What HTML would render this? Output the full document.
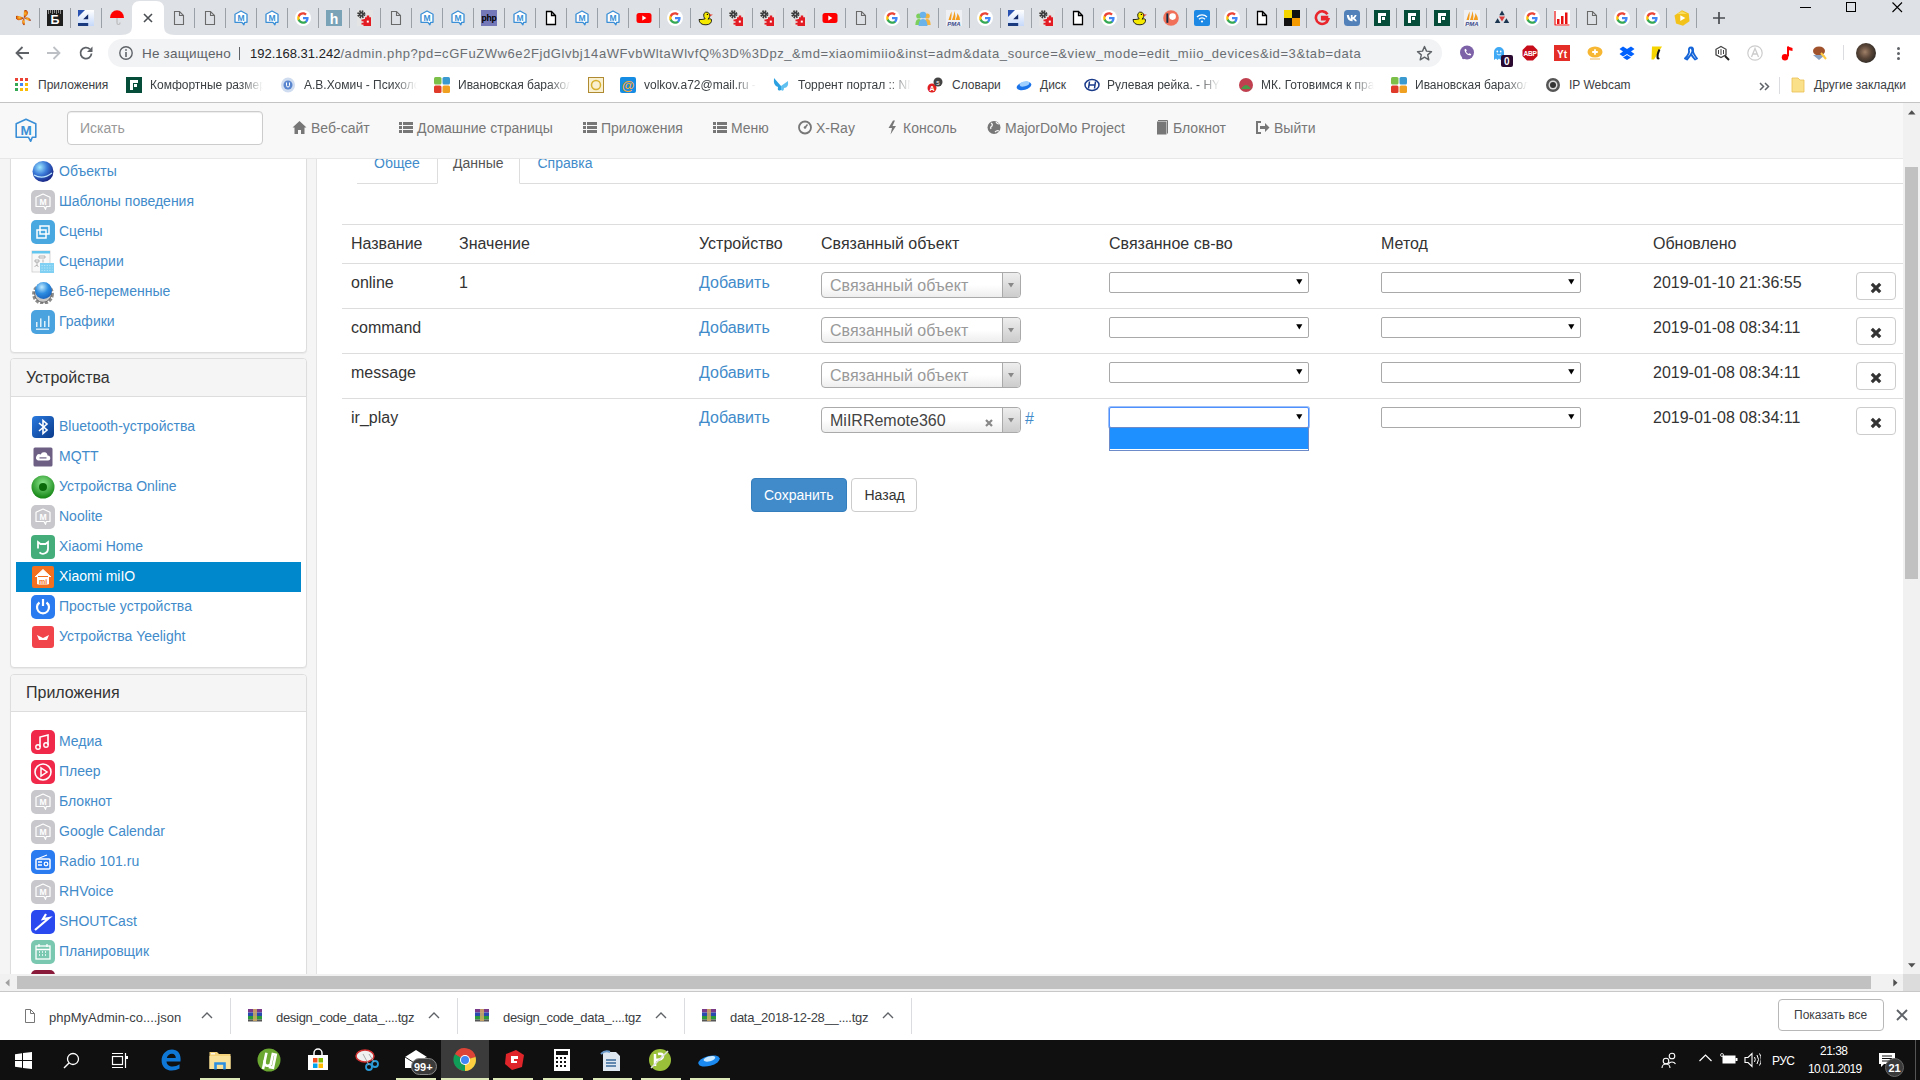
<!DOCTYPE html><html><head><meta charset="utf-8"><style>
html,body{margin:0;padding:0;width:1920px;height:1080px;overflow:hidden;background:#fff;font-family:"Liberation Sans", sans-serif;}
.a{position:absolute;}
.t{position:absolute;white-space:nowrap;line-height:1;}
.fade{-webkit-mask-image:linear-gradient(to right,#000 80%,transparent 100%);mask-image:linear-gradient(to right,#000 80%,transparent 100%);overflow:hidden;}
</style></head><body>
<div class="a" style="left:0px;top:0px;width:1920px;height:35px;background:#dee1e6"></div>
<svg class="a" style="left:120px;top:0" width="56" height="35" viewBox="0 0 56 35"><path d="M1 35 Q12 35 12 27 V9 Q12 1 20 1 H36 Q44 1 44 9 V27 Q44 35 55 35 Z" fill="#fff"/></svg>
<div class="a" style="left:39px;top:8px;width:1px;height:20px;background:#9aa0a6"></div>
<div class="a" style="left:70px;top:8px;width:1px;height:20px;background:#9aa0a6"></div>
<div class="a" style="left:101px;top:8px;width:1px;height:20px;background:#9aa0a6"></div>
<div class="a" style="left:194px;top:8px;width:1px;height:20px;background:#9aa0a6"></div>
<div class="a" style="left:225px;top:8px;width:1px;height:20px;background:#9aa0a6"></div>
<div class="a" style="left:256px;top:8px;width:1px;height:20px;background:#9aa0a6"></div>
<div class="a" style="left:287px;top:8px;width:1px;height:20px;background:#9aa0a6"></div>
<div class="a" style="left:318px;top:8px;width:1px;height:20px;background:#9aa0a6"></div>
<div class="a" style="left:349px;top:8px;width:1px;height:20px;background:#9aa0a6"></div>
<div class="a" style="left:380px;top:8px;width:1px;height:20px;background:#9aa0a6"></div>
<div class="a" style="left:411px;top:8px;width:1px;height:20px;background:#9aa0a6"></div>
<div class="a" style="left:442px;top:8px;width:1px;height:20px;background:#9aa0a6"></div>
<div class="a" style="left:473px;top:8px;width:1px;height:20px;background:#9aa0a6"></div>
<div class="a" style="left:504px;top:8px;width:1px;height:20px;background:#9aa0a6"></div>
<div class="a" style="left:535px;top:8px;width:1px;height:20px;background:#9aa0a6"></div>
<div class="a" style="left:566px;top:8px;width:1px;height:20px;background:#9aa0a6"></div>
<div class="a" style="left:597px;top:8px;width:1px;height:20px;background:#9aa0a6"></div>
<div class="a" style="left:628px;top:8px;width:1px;height:20px;background:#9aa0a6"></div>
<div class="a" style="left:659px;top:8px;width:1px;height:20px;background:#9aa0a6"></div>
<div class="a" style="left:690px;top:8px;width:1px;height:20px;background:#9aa0a6"></div>
<div class="a" style="left:721px;top:8px;width:1px;height:20px;background:#9aa0a6"></div>
<div class="a" style="left:752px;top:8px;width:1px;height:20px;background:#9aa0a6"></div>
<div class="a" style="left:783px;top:8px;width:1px;height:20px;background:#9aa0a6"></div>
<div class="a" style="left:814px;top:8px;width:1px;height:20px;background:#9aa0a6"></div>
<div class="a" style="left:845px;top:8px;width:1px;height:20px;background:#9aa0a6"></div>
<div class="a" style="left:876px;top:8px;width:1px;height:20px;background:#9aa0a6"></div>
<div class="a" style="left:907px;top:8px;width:1px;height:20px;background:#9aa0a6"></div>
<div class="a" style="left:938px;top:8px;width:1px;height:20px;background:#9aa0a6"></div>
<div class="a" style="left:969px;top:8px;width:1px;height:20px;background:#9aa0a6"></div>
<div class="a" style="left:1000px;top:8px;width:1px;height:20px;background:#9aa0a6"></div>
<div class="a" style="left:1031px;top:8px;width:1px;height:20px;background:#9aa0a6"></div>
<div class="a" style="left:1062px;top:8px;width:1px;height:20px;background:#9aa0a6"></div>
<div class="a" style="left:1093px;top:8px;width:1px;height:20px;background:#9aa0a6"></div>
<div class="a" style="left:1124px;top:8px;width:1px;height:20px;background:#9aa0a6"></div>
<div class="a" style="left:1155px;top:8px;width:1px;height:20px;background:#9aa0a6"></div>
<div class="a" style="left:1186px;top:8px;width:1px;height:20px;background:#9aa0a6"></div>
<div class="a" style="left:1216px;top:8px;width:1px;height:20px;background:#9aa0a6"></div>
<div class="a" style="left:1246px;top:8px;width:1px;height:20px;background:#9aa0a6"></div>
<div class="a" style="left:1276px;top:8px;width:1px;height:20px;background:#9aa0a6"></div>
<div class="a" style="left:1306px;top:8px;width:1px;height:20px;background:#9aa0a6"></div>
<div class="a" style="left:1336px;top:8px;width:1px;height:20px;background:#9aa0a6"></div>
<div class="a" style="left:1366px;top:8px;width:1px;height:20px;background:#9aa0a6"></div>
<div class="a" style="left:1396px;top:8px;width:1px;height:20px;background:#9aa0a6"></div>
<div class="a" style="left:1426px;top:8px;width:1px;height:20px;background:#9aa0a6"></div>
<div class="a" style="left:1456px;top:8px;width:1px;height:20px;background:#9aa0a6"></div>
<div class="a" style="left:1486px;top:8px;width:1px;height:20px;background:#9aa0a6"></div>
<div class="a" style="left:1516px;top:8px;width:1px;height:20px;background:#9aa0a6"></div>
<div class="a" style="left:1546px;top:8px;width:1px;height:20px;background:#9aa0a6"></div>
<div class="a" style="left:1576px;top:8px;width:1px;height:20px;background:#9aa0a6"></div>
<div class="a" style="left:1606px;top:8px;width:1px;height:20px;background:#9aa0a6"></div>
<div class="a" style="left:1636px;top:8px;width:1px;height:20px;background:#9aa0a6"></div>
<div class="a" style="left:1666px;top:8px;width:1px;height:20px;background:#9aa0a6"></div>
<div class="a" style="left:1696px;top:8px;width:1px;height:20px;background:#9aa0a6"></div>
<svg class="a" style="left:16px;top:10px" width="16" height="16" viewBox="0 0 16 16"><defs><radialGradient id="bfg" cx="50%" cy="50%" r="60%"><stop offset="0" stop-color="#f8c030"/><stop offset=".6" stop-color="#e87010"/><stop offset="1" stop-color="#902000"/></radialGradient></defs><g transform="rotate(-35 8 8)" fill="url(#bfg)"><path d="M8 8 Q3 -1 1.5 3 Q0 8 8 8z"/><path d="M8 8 Q13 -1 14.5 3 Q16 8 8 8z"/><path d="M8 8 Q3 9 3.5 13.5 Q5 16 8 8z"/><path d="M8 8 Q13 9 12.5 13.5 Q11 16 8 8z"/></g></svg>
<svg class="a" style="left:47px;top:10px" width="16" height="16" viewBox="0 0 16 16"><rect x="0" y="0" width="16" height="16" fill="#1e1e1e"/><path d="M1.5 0v4M3.5 0v3M5.5 0v4M7.5 0v3M9.5 0v4M11.5 0v3M13.5 0v4" stroke="#aaa" stroke-width=".8"/><text x="8" y="13.8" font-size="12.5" font-family="Liberation Sans" font-weight="bold" text-anchor="middle" fill="#fff">Б</text></svg>
<svg class="a" style="left:78px;top:10px" width="16" height="16" viewBox="0 0 16 16"><defs><linearGradient id="g4i" x1="0" y1="0" x2="0" y2="1"><stop offset="0" stop-color="#fff"/><stop offset="1" stop-color="#c5d8fa"/></linearGradient></defs><rect x="0" y="0" width="16" height="16" fill="url(#g4i)"/><path d="M0 0H7L0 7z" fill="#2a52b0"/><path d="M10.2 4.2V9.2H5.2z" fill="#122a6a"/><rect x="0" y="13" width="10.2" height="3" fill="#1a3a80"/></svg>
<svg class="a" style="left:109px;top:10px" width="16" height="16" viewBox="0 0 16 16"><path d="M1 8 A7 7.8 0 0 1 15 8 Z" fill="#f00"/><path d="M8 8v5a1.5 1.5 0 0 0 3 0v-.5" fill="none" stroke="#bbb" stroke-width="1.2"/></svg>
<svg class="a" style="left:171px;top:10px" width="16" height="16" viewBox="0 0 16 16"><path d="M3.5 1.5 H8.5 L12.5 5.5 V14.5 H3.5 Z M8.5 1.5 V5.5 H12.5" fill="none" stroke="#6a6a6a" stroke-width="1.1" stroke-linejoin="miter"/></svg>
<svg class="a" style="left:202px;top:10px" width="16" height="16" viewBox="0 0 16 16"><path d="M3.5 1.5 H8.5 L12.5 5.5 V14.5 H3.5 Z M8.5 1.5 V5.5 H12.5" fill="none" stroke="#6a6a6a" stroke-width="1.1" stroke-linejoin="miter"/></svg>
<svg class="a" style="left:233px;top:10px" width="16" height="16" viewBox="0 0 16 16"><path d="M8 1 L14 4.2 V12.3 H11.6 L10.9 14.8 L8.9 12.3 H2 V4.2 Z" fill="#fff" stroke="#3a8fd6" stroke-width="1.3" stroke-linejoin="round"/><text x="8" y="11.2" font-size="8.5" font-family="Liberation Sans" font-weight="bold" text-anchor="middle" fill="#3a8fd6">M</text></svg>
<svg class="a" style="left:264px;top:10px" width="16" height="16" viewBox="0 0 16 16"><path d="M8 1 L14 4.2 V12.3 H11.6 L10.9 14.8 L8.9 12.3 H2 V4.2 Z" fill="#fff" stroke="#3a8fd6" stroke-width="1.3" stroke-linejoin="round"/><text x="8" y="11.2" font-size="8.5" font-family="Liberation Sans" font-weight="bold" text-anchor="middle" fill="#3a8fd6">M</text></svg>
<svg class="a" style="left:295px;top:10px" width="16" height="16" viewBox="0 0 16 16"><circle cx="8" cy="8" r="8" fill="#fff"/><path d="M13.6 8.1c0-.4 0-.8-.1-1.2H8v2.3h3.2c-.1.8-.6 1.4-1.2 1.8v1.5h1.9c1.1-1 1.7-2.5 1.7-4.4z" fill="#4285f4"/><path d="M8 13.8c1.6 0 2.9-.5 3.9-1.4L10 10.9c-.5.4-1.2.6-2 .6-1.5 0-2.8-1-3.3-2.4H2.8v1.5C3.8 12.6 5.7 13.8 8 13.8z" fill="#34a853"/><path d="M4.7 9.1c-.1-.4-.2-.8-.2-1.1s.1-.8.2-1.1V5.4H2.8C2.4 6.2 2.2 7.1 2.2 8s.2 1.8.6 2.6z" fill="#fbbc05"/><path d="M8 4.5c.9 0 1.6.3 2.2.9l1.6-1.6C10.9 2.8 9.6 2.2 8 2.2 5.7 2.2 3.8 3.4 2.8 5.4l1.9 1.5C5.2 5.5 6.5 4.5 8 4.5z" fill="#ea4335"/></svg>
<svg class="a" style="left:326px;top:10px" width="16" height="16" viewBox="0 0 16 16"><rect x="0" y="0" width="16" height="16" fill="#7ba3b8"/><text x="8" y="13.5" font-size="14" font-family="Liberation Sans" font-weight="bold" text-anchor="middle" fill="#fff">h</text></svg>
<svg class="a" style="left:357px;top:10px" width="16" height="16" viewBox="0 0 16 16"><rect x="0" y="0" width="16" height="16" fill="#e4e4e4"/><circle cx="4.3" cy="4.3" r="3.1" fill="none" stroke="#3a3a3a" stroke-width="2" stroke-dasharray="1.5 0.95"/><circle cx="4.3" cy="4.3" r="2.5" fill="#3a3a3a"/><circle cx="4.3" cy="4.3" r=".9" fill="#bbb"/><path d="M6.5 16V9H8V7.3h1.8V5.5h2.4v1.8H14V16z" fill="#e31b23"/><rect x="4.5" y="9.5" width="2.5" height="1.8" fill="#e31b23"/><rect x="4.5" y="12.8" width="2.5" height="1.8" fill="#e31b23"/><rect x="9.8" y="10.6" width="2" height="2" fill="#fff"/></svg>
<svg class="a" style="left:388px;top:10px" width="16" height="16" viewBox="0 0 16 16"><path d="M3.5 1.5 H8.5 L12.5 5.5 V14.5 H3.5 Z M8.5 1.5 V5.5 H12.5" fill="none" stroke="#6a6a6a" stroke-width="1.1" stroke-linejoin="miter"/></svg>
<svg class="a" style="left:419px;top:10px" width="16" height="16" viewBox="0 0 16 16"><path d="M8 1 L14 4.2 V12.3 H11.6 L10.9 14.8 L8.9 12.3 H2 V4.2 Z" fill="#fff" stroke="#3a8fd6" stroke-width="1.3" stroke-linejoin="round"/><text x="8" y="11.2" font-size="8.5" font-family="Liberation Sans" font-weight="bold" text-anchor="middle" fill="#3a8fd6">M</text></svg>
<svg class="a" style="left:450px;top:10px" width="16" height="16" viewBox="0 0 16 16"><path d="M8 1 L14 4.2 V12.3 H11.6 L10.9 14.8 L8.9 12.3 H2 V4.2 Z" fill="#fff" stroke="#3a8fd6" stroke-width="1.3" stroke-linejoin="round"/><text x="8" y="11.2" font-size="8.5" font-family="Liberation Sans" font-weight="bold" text-anchor="middle" fill="#3a8fd6">M</text></svg>
<svg class="a" style="left:481px;top:10px" width="16" height="16" viewBox="0 0 16 16"><rect x="0" y="0" width="16" height="16" fill="#7478b8"/><text x="8" y="11" font-size="8.6" font-family="Liberation Sans" font-weight="bold" text-anchor="middle" fill="#000" letter-spacing="-0.3">php</text></svg>
<svg class="a" style="left:512px;top:10px" width="16" height="16" viewBox="0 0 16 16"><path d="M8 1 L14 4.2 V12.3 H11.6 L10.9 14.8 L8.9 12.3 H2 V4.2 Z" fill="#fff" stroke="#3a8fd6" stroke-width="1.3" stroke-linejoin="round"/><text x="8" y="11.2" font-size="8.5" font-family="Liberation Sans" font-weight="bold" text-anchor="middle" fill="#3a8fd6">M</text></svg>
<svg class="a" style="left:543px;top:10px" width="16" height="16" viewBox="0 0 16 16"><path d="M3.5 1.5 H8.5 L12.5 5.5 V14.5 H3.5 Z M8.5 1.5 V5.5 H12.5" fill="#fff" stroke="#000" stroke-width="1.3" stroke-linejoin="miter"/></svg>
<svg class="a" style="left:574px;top:10px" width="16" height="16" viewBox="0 0 16 16"><path d="M8 1 L14 4.2 V12.3 H11.6 L10.9 14.8 L8.9 12.3 H2 V4.2 Z" fill="#fff" stroke="#3a8fd6" stroke-width="1.3" stroke-linejoin="round"/><text x="8" y="11.2" font-size="8.5" font-family="Liberation Sans" font-weight="bold" text-anchor="middle" fill="#3a8fd6">M</text></svg>
<svg class="a" style="left:605px;top:10px" width="16" height="16" viewBox="0 0 16 16"><path d="M8 1 L14 4.2 V12.3 H11.6 L10.9 14.8 L8.9 12.3 H2 V4.2 Z" fill="#fff" stroke="#3a8fd6" stroke-width="1.3" stroke-linejoin="round"/><text x="8" y="11.2" font-size="8.5" font-family="Liberation Sans" font-weight="bold" text-anchor="middle" fill="#3a8fd6">M</text></svg>
<svg class="a" style="left:636px;top:10px" width="16" height="16" viewBox="0 0 16 16"><rect x="0.5" y="3" width="15" height="10" rx="2.5" fill="#f00"/><path d="M6.3 5.6v4.8L10.4 8z" fill="#fff"/></svg>
<svg class="a" style="left:667px;top:10px" width="16" height="16" viewBox="0 0 16 16"><circle cx="8" cy="8" r="8" fill="#fff"/><path d="M13.6 8.1c0-.4 0-.8-.1-1.2H8v2.3h3.2c-.1.8-.6 1.4-1.2 1.8v1.5h1.9c1.1-1 1.7-2.5 1.7-4.4z" fill="#4285f4"/><path d="M8 13.8c1.6 0 2.9-.5 3.9-1.4L10 10.9c-.5.4-1.2.6-2 .6-1.5 0-2.8-1-3.3-2.4H2.8v1.5C3.8 12.6 5.7 13.8 8 13.8z" fill="#34a853"/><path d="M4.7 9.1c-.1-.4-.2-.8-.2-1.1s.1-.8.2-1.1V5.4H2.8C2.4 6.2 2.2 7.1 2.2 8s.2 1.8.6 2.6z" fill="#fbbc05"/><path d="M8 4.5c.9 0 1.6.3 2.2.9l1.6-1.6C10.9 2.8 9.6 2.2 8 2.2 5.7 2.2 3.8 3.4 2.8 5.4l1.9 1.5C5.2 5.5 6.5 4.5 8 4.5z" fill="#ea4335"/></svg>
<svg class="a" style="left:698px;top:10px" width="16" height="16" viewBox="0 0 16 16"><path d="M1 9.5 Q1.5 15 8 14.8 Q14 14.5 13.5 9.5 Q12 8 10 9.2 Q12.8 7 11.5 4 Q10 1.3 7.5 2.2 Q5 3.2 5.8 6.5 Q6.3 8.3 7.2 8.8 Q4 9.8 1 9.5z" fill="#f5e900" stroke="#111" stroke-width=".9" stroke-linejoin="round"/><path d="M11.3 4.2 L15 4.8 L11.8 6.2z" fill="#e0301e"/><circle cx="9.4" cy="4.4" r=".7" fill="#000"/></svg>
<svg class="a" style="left:729px;top:10px" width="16" height="16" viewBox="0 0 16 16"><rect x="0" y="0" width="16" height="16" fill="#e4e4e4"/><circle cx="4.3" cy="4.3" r="3.1" fill="none" stroke="#3a3a3a" stroke-width="2" stroke-dasharray="1.5 0.95"/><circle cx="4.3" cy="4.3" r="2.5" fill="#3a3a3a"/><circle cx="4.3" cy="4.3" r=".9" fill="#bbb"/><path d="M6.5 16V9H8V7.3h1.8V5.5h2.4v1.8H14V16z" fill="#e31b23"/><rect x="4.5" y="9.5" width="2.5" height="1.8" fill="#e31b23"/><rect x="4.5" y="12.8" width="2.5" height="1.8" fill="#e31b23"/><rect x="9.8" y="10.6" width="2" height="2" fill="#fff"/></svg>
<svg class="a" style="left:760px;top:10px" width="16" height="16" viewBox="0 0 16 16"><rect x="0" y="0" width="16" height="16" fill="#e4e4e4"/><circle cx="4.3" cy="4.3" r="3.1" fill="none" stroke="#3a3a3a" stroke-width="2" stroke-dasharray="1.5 0.95"/><circle cx="4.3" cy="4.3" r="2.5" fill="#3a3a3a"/><circle cx="4.3" cy="4.3" r=".9" fill="#bbb"/><path d="M6.5 16V9H8V7.3h1.8V5.5h2.4v1.8H14V16z" fill="#e31b23"/><rect x="4.5" y="9.5" width="2.5" height="1.8" fill="#e31b23"/><rect x="4.5" y="12.8" width="2.5" height="1.8" fill="#e31b23"/><rect x="9.8" y="10.6" width="2" height="2" fill="#fff"/></svg>
<svg class="a" style="left:791px;top:10px" width="16" height="16" viewBox="0 0 16 16"><rect x="0" y="0" width="16" height="16" fill="#e4e4e4"/><circle cx="4.3" cy="4.3" r="3.1" fill="none" stroke="#3a3a3a" stroke-width="2" stroke-dasharray="1.5 0.95"/><circle cx="4.3" cy="4.3" r="2.5" fill="#3a3a3a"/><circle cx="4.3" cy="4.3" r=".9" fill="#bbb"/><path d="M6.5 16V9H8V7.3h1.8V5.5h2.4v1.8H14V16z" fill="#e31b23"/><rect x="4.5" y="9.5" width="2.5" height="1.8" fill="#e31b23"/><rect x="4.5" y="12.8" width="2.5" height="1.8" fill="#e31b23"/><rect x="9.8" y="10.6" width="2" height="2" fill="#fff"/></svg>
<svg class="a" style="left:822px;top:10px" width="16" height="16" viewBox="0 0 16 16"><rect x="0.5" y="3" width="15" height="10" rx="2.5" fill="#f00"/><path d="M6.3 5.6v4.8L10.4 8z" fill="#fff"/></svg>
<svg class="a" style="left:853px;top:10px" width="16" height="16" viewBox="0 0 16 16"><path d="M3.5 1.5 H8.5 L12.5 5.5 V14.5 H3.5 Z M8.5 1.5 V5.5 H12.5" fill="none" stroke="#6a6a6a" stroke-width="1.1" stroke-linejoin="miter"/></svg>
<svg class="a" style="left:884px;top:10px" width="16" height="16" viewBox="0 0 16 16"><circle cx="8" cy="8" r="8" fill="#fff"/><path d="M13.6 8.1c0-.4 0-.8-.1-1.2H8v2.3h3.2c-.1.8-.6 1.4-1.2 1.8v1.5h1.9c1.1-1 1.7-2.5 1.7-4.4z" fill="#4285f4"/><path d="M8 13.8c1.6 0 2.9-.5 3.9-1.4L10 10.9c-.5.4-1.2.6-2 .6-1.5 0-2.8-1-3.3-2.4H2.8v1.5C3.8 12.6 5.7 13.8 8 13.8z" fill="#34a853"/><path d="M4.7 9.1c-.1-.4-.2-.8-.2-1.1s.1-.8.2-1.1V5.4H2.8C2.4 6.2 2.2 7.1 2.2 8s.2 1.8.6 2.6z" fill="#fbbc05"/><path d="M8 4.5c.9 0 1.6.3 2.2.9l1.6-1.6C10.9 2.8 9.6 2.2 8 2.2 5.7 2.2 3.8 3.4 2.8 5.4l1.9 1.5C5.2 5.5 6.5 4.5 8 4.5z" fill="#ea4335"/></svg>
<svg class="a" style="left:915px;top:10px" width="16" height="16" viewBox="0 0 16 16"><circle cx="3.8" cy="6" r="2.6" fill="#7ccf5a"/><path d="M0.3 15 Q0.5 9 3.8 9 Q6 9 6.5 12 V15z" fill="#7ccf5a"/><circle cx="12.2" cy="6" r="2.6" fill="#f3b33d"/><path d="M15.7 15 Q15.5 9 12.2 9 Q10 9 9.5 12 V15z" fill="#f3b33d"/><circle cx="8" cy="5" r="3.3" fill="#6ab3ea"/><path d="M3.5 16 Q3.8 9 8 9 Q12.2 9 12.5 16z" fill="#6ab3ea"/></svg>
<svg class="a" style="left:946px;top:10px" width="16" height="16" viewBox="0 0 16 16"><rect x="0" y="0" width="16" height="16" fill="#fff" fill-opacity=".5"/><path d="M2.5 10 Q4 5 5.5 1.5 Q6 5 5 10z M6 10 Q8 5 8.5 1 Q10 6 9 10z M9.5 10 Q11.5 6 11.5 3 Q14 7 14 10z" fill="#f39c1e"/><text x="8" y="15.5" font-size="6" font-family="Liberation Sans" font-weight="bold" font-style="italic" text-anchor="middle" fill="#3a4a8a">PMA</text></svg>
<svg class="a" style="left:977px;top:10px" width="16" height="16" viewBox="0 0 16 16"><circle cx="8" cy="8" r="8" fill="#fff"/><path d="M13.6 8.1c0-.4 0-.8-.1-1.2H8v2.3h3.2c-.1.8-.6 1.4-1.2 1.8v1.5h1.9c1.1-1 1.7-2.5 1.7-4.4z" fill="#4285f4"/><path d="M8 13.8c1.6 0 2.9-.5 3.9-1.4L10 10.9c-.5.4-1.2.6-2 .6-1.5 0-2.8-1-3.3-2.4H2.8v1.5C3.8 12.6 5.7 13.8 8 13.8z" fill="#34a853"/><path d="M4.7 9.1c-.1-.4-.2-.8-.2-1.1s.1-.8.2-1.1V5.4H2.8C2.4 6.2 2.2 7.1 2.2 8s.2 1.8.6 2.6z" fill="#fbbc05"/><path d="M8 4.5c.9 0 1.6.3 2.2.9l1.6-1.6C10.9 2.8 9.6 2.2 8 2.2 5.7 2.2 3.8 3.4 2.8 5.4l1.9 1.5C5.2 5.5 6.5 4.5 8 4.5z" fill="#ea4335"/></svg>
<svg class="a" style="left:1008px;top:10px" width="16" height="16" viewBox="0 0 16 16"><defs><linearGradient id="g4i" x1="0" y1="0" x2="0" y2="1"><stop offset="0" stop-color="#fff"/><stop offset="1" stop-color="#c5d8fa"/></linearGradient></defs><rect x="0" y="0" width="16" height="16" fill="url(#g4i)"/><path d="M0 0H7L0 7z" fill="#2a52b0"/><path d="M10.2 4.2V9.2H5.2z" fill="#122a6a"/><rect x="0" y="13" width="10.2" height="3" fill="#1a3a80"/></svg>
<svg class="a" style="left:1039px;top:10px" width="16" height="16" viewBox="0 0 16 16"><rect x="0" y="0" width="16" height="16" fill="#e4e4e4"/><circle cx="4.3" cy="4.3" r="3.1" fill="none" stroke="#3a3a3a" stroke-width="2" stroke-dasharray="1.5 0.95"/><circle cx="4.3" cy="4.3" r="2.5" fill="#3a3a3a"/><circle cx="4.3" cy="4.3" r=".9" fill="#bbb"/><path d="M6.5 16V9H8V7.3h1.8V5.5h2.4v1.8H14V16z" fill="#e31b23"/><rect x="4.5" y="9.5" width="2.5" height="1.8" fill="#e31b23"/><rect x="4.5" y="12.8" width="2.5" height="1.8" fill="#e31b23"/><rect x="9.8" y="10.6" width="2" height="2" fill="#fff"/></svg>
<svg class="a" style="left:1070px;top:10px" width="16" height="16" viewBox="0 0 16 16"><path d="M3.5 1.5 H8.5 L12.5 5.5 V14.5 H3.5 Z M8.5 1.5 V5.5 H12.5" fill="#fff" stroke="#000" stroke-width="1.3" stroke-linejoin="miter"/></svg>
<svg class="a" style="left:1101px;top:10px" width="16" height="16" viewBox="0 0 16 16"><circle cx="8" cy="8" r="8" fill="#fff"/><path d="M13.6 8.1c0-.4 0-.8-.1-1.2H8v2.3h3.2c-.1.8-.6 1.4-1.2 1.8v1.5h1.9c1.1-1 1.7-2.5 1.7-4.4z" fill="#4285f4"/><path d="M8 13.8c1.6 0 2.9-.5 3.9-1.4L10 10.9c-.5.4-1.2.6-2 .6-1.5 0-2.8-1-3.3-2.4H2.8v1.5C3.8 12.6 5.7 13.8 8 13.8z" fill="#34a853"/><path d="M4.7 9.1c-.1-.4-.2-.8-.2-1.1s.1-.8.2-1.1V5.4H2.8C2.4 6.2 2.2 7.1 2.2 8s.2 1.8.6 2.6z" fill="#fbbc05"/><path d="M8 4.5c.9 0 1.6.3 2.2.9l1.6-1.6C10.9 2.8 9.6 2.2 8 2.2 5.7 2.2 3.8 3.4 2.8 5.4l1.9 1.5C5.2 5.5 6.5 4.5 8 4.5z" fill="#ea4335"/></svg>
<svg class="a" style="left:1132px;top:10px" width="16" height="16" viewBox="0 0 16 16"><path d="M1 9.5 Q1.5 15 8 14.8 Q14 14.5 13.5 9.5 Q12 8 10 9.2 Q12.8 7 11.5 4 Q10 1.3 7.5 2.2 Q5 3.2 5.8 6.5 Q6.3 8.3 7.2 8.8 Q4 9.8 1 9.5z" fill="#f5e900" stroke="#111" stroke-width=".9" stroke-linejoin="round"/><path d="M11.3 4.2 L15 4.8 L11.8 6.2z" fill="#e0301e"/><circle cx="9.4" cy="4.4" r=".7" fill="#000"/></svg>
<svg class="a" style="left:1163px;top:10px" width="16" height="16" viewBox="0 0 16 16"><circle cx="8" cy="8" r="7.8" fill="#f0705a"/><circle cx="9.6" cy="6.6" r="3.3" fill="#fff"/><rect x="3.4" y="3.4" width="1.9" height="9.4" fill="#0e2a44"/></svg>
<svg class="a" style="left:1194px;top:10px" width="16" height="16" viewBox="0 0 16 16"><rect x="0" y="0" width="16" height="16" rx="2" fill="#1e88e5"/><path d="M3 7a7 7 0 0 1 10 0M5 9.2a4 4 0 0 1 6 0" fill="none" stroke="#fff" stroke-width="1.3"/><circle cx="8" cy="11.5" r="1.1" fill="#fff"/></svg>
<svg class="a" style="left:1224px;top:10px" width="16" height="16" viewBox="0 0 16 16"><circle cx="8" cy="8" r="8" fill="#fff"/><path d="M13.6 8.1c0-.4 0-.8-.1-1.2H8v2.3h3.2c-.1.8-.6 1.4-1.2 1.8v1.5h1.9c1.1-1 1.7-2.5 1.7-4.4z" fill="#4285f4"/><path d="M8 13.8c1.6 0 2.9-.5 3.9-1.4L10 10.9c-.5.4-1.2.6-2 .6-1.5 0-2.8-1-3.3-2.4H2.8v1.5C3.8 12.6 5.7 13.8 8 13.8z" fill="#34a853"/><path d="M4.7 9.1c-.1-.4-.2-.8-.2-1.1s.1-.8.2-1.1V5.4H2.8C2.4 6.2 2.2 7.1 2.2 8s.2 1.8.6 2.6z" fill="#fbbc05"/><path d="M8 4.5c.9 0 1.6.3 2.2.9l1.6-1.6C10.9 2.8 9.6 2.2 8 2.2 5.7 2.2 3.8 3.4 2.8 5.4l1.9 1.5C5.2 5.5 6.5 4.5 8 4.5z" fill="#ea4335"/></svg>
<svg class="a" style="left:1254px;top:10px" width="16" height="16" viewBox="0 0 16 16"><path d="M3.5 1.5 H8.5 L12.5 5.5 V14.5 H3.5 Z M8.5 1.5 V5.5 H12.5" fill="#fff" stroke="#000" stroke-width="1.3" stroke-linejoin="miter"/></svg>
<svg class="a" style="left:1284px;top:10px" width="16" height="16" viewBox="0 0 16 16"><rect x="0" y="0" width="8" height="8" fill="#f5d500"/><rect x="8" y="0" width="8" height="8" fill="#111"/><rect x="0" y="8" width="8" height="8" fill="#111"/><rect x="8" y="8" width="8" height="8" fill="#f59a00"/></svg>
<svg class="a" style="left:1314px;top:10px" width="16" height="16" viewBox="0 0 16 16"><path d="M13.5 4.2 A6.3 6.3 0 1 0 14.3 9.2 H8.2 V7 H14.3" fill="none" stroke="#e8262c" stroke-width="2.6"/></svg>
<svg class="a" style="left:1344px;top:10px" width="16" height="16" viewBox="0 0 16 16"><rect x="0" y="0" width="16" height="16" rx="3.5" fill="#5181b8"/><path d="M2.8 5h2c.6 2.3 1.5 3.6 2 3.8V5h1.8v2.3c.9-.2 1.8-1.4 2.2-2.3h1.8c-.3 1.4-1.3 2.6-2.1 3.2.8.4 1.9 1.5 2.4 3H11c-.4-1-1.4-1.9-2.4-2v2H8c-3 0-4.8-2-5.2-6.2z" fill="#fff"/></svg>
<svg class="a" style="left:1374px;top:10px" width="16" height="16" viewBox="0 0 16 16"><rect x="0" y="0" width="16" height="16" fill="#054d38"/><rect x="4" y="3" width="3" height="10" fill="#fff"/><rect x="4" y="3" width="8" height="3" fill="#fff"/><rect x="8" y="7" width="3" height="3" fill="#fff"/></svg>
<svg class="a" style="left:1404px;top:10px" width="16" height="16" viewBox="0 0 16 16"><rect x="0" y="0" width="16" height="16" fill="#054d38"/><rect x="4" y="3" width="3" height="10" fill="#fff"/><rect x="4" y="3" width="8" height="3" fill="#fff"/><rect x="8" y="7" width="3" height="3" fill="#fff"/></svg>
<svg class="a" style="left:1434px;top:10px" width="16" height="16" viewBox="0 0 16 16"><rect x="0" y="0" width="16" height="16" fill="#054d38"/><rect x="4" y="3" width="3" height="10" fill="#fff"/><rect x="4" y="3" width="8" height="3" fill="#fff"/><rect x="8" y="7" width="3" height="3" fill="#fff"/></svg>
<svg class="a" style="left:1464px;top:10px" width="16" height="16" viewBox="0 0 16 16"><rect x="0" y="0" width="16" height="16" fill="#fff" fill-opacity=".5"/><path d="M2.5 10 Q4 5 5.5 1.5 Q6 5 5 10z M6 10 Q8 5 8.5 1 Q10 6 9 10z M9.5 10 Q11.5 6 11.5 3 Q14 7 14 10z" fill="#f39c1e"/><text x="8" y="15.5" font-size="6" font-family="Liberation Sans" font-weight="bold" font-style="italic" text-anchor="middle" fill="#3a4a8a">PMA</text></svg>
<svg class="a" style="left:1494px;top:10px" width="16" height="16" viewBox="0 0 16 16"><path d="M8 0.5L10.7 5.2H5.3z" fill="#1b3550"/><path d="M3.6 8.2L6.4 13H0.8z" fill="#1b3550"/><path d="M12.4 8.2L15.2 13H9.6z" fill="#1b3550"/><path d="M5 6.5H11L8 11.5z" fill="#d93a3a"/></svg>
<svg class="a" style="left:1524px;top:10px" width="16" height="16" viewBox="0 0 16 16"><circle cx="8" cy="8" r="8" fill="#fff"/><path d="M13.6 8.1c0-.4 0-.8-.1-1.2H8v2.3h3.2c-.1.8-.6 1.4-1.2 1.8v1.5h1.9c1.1-1 1.7-2.5 1.7-4.4z" fill="#4285f4"/><path d="M8 13.8c1.6 0 2.9-.5 3.9-1.4L10 10.9c-.5.4-1.2.6-2 .6-1.5 0-2.8-1-3.3-2.4H2.8v1.5C3.8 12.6 5.7 13.8 8 13.8z" fill="#34a853"/><path d="M4.7 9.1c-.1-.4-.2-.8-.2-1.1s.1-.8.2-1.1V5.4H2.8C2.4 6.2 2.2 7.1 2.2 8s.2 1.8.6 2.6z" fill="#fbbc05"/><path d="M8 4.5c.9 0 1.6.3 2.2.9l1.6-1.6C10.9 2.8 9.6 2.2 8 2.2 5.7 2.2 3.8 3.4 2.8 5.4l1.9 1.5C5.2 5.5 6.5 4.5 8 4.5z" fill="#ea4335"/></svg>
<svg class="a" style="left:1554px;top:10px" width="16" height="16" viewBox="0 0 16 16"><rect x="0" y="0" width="16" height="16" fill="#fff"/><path d="M1 1V15H15.5" fill="none" stroke="#e81010" stroke-width="1.2"/><rect x="3" y="9" width="2.5" height="5" fill="#e81010"/><rect x="7" y="6" width="2.5" height="8" fill="#e81010"/><rect x="11" y="2.5" width="2.5" height="11.5" fill="#e81010"/></svg>
<svg class="a" style="left:1584px;top:10px" width="16" height="16" viewBox="0 0 16 16"><path d="M3.5 1.5 H8.5 L12.5 5.5 V14.5 H3.5 Z M8.5 1.5 V5.5 H12.5" fill="none" stroke="#6a6a6a" stroke-width="1.1" stroke-linejoin="miter"/></svg>
<svg class="a" style="left:1614px;top:10px" width="16" height="16" viewBox="0 0 16 16"><circle cx="8" cy="8" r="8" fill="#fff"/><path d="M13.6 8.1c0-.4 0-.8-.1-1.2H8v2.3h3.2c-.1.8-.6 1.4-1.2 1.8v1.5h1.9c1.1-1 1.7-2.5 1.7-4.4z" fill="#4285f4"/><path d="M8 13.8c1.6 0 2.9-.5 3.9-1.4L10 10.9c-.5.4-1.2.6-2 .6-1.5 0-2.8-1-3.3-2.4H2.8v1.5C3.8 12.6 5.7 13.8 8 13.8z" fill="#34a853"/><path d="M4.7 9.1c-.1-.4-.2-.8-.2-1.1s.1-.8.2-1.1V5.4H2.8C2.4 6.2 2.2 7.1 2.2 8s.2 1.8.6 2.6z" fill="#fbbc05"/><path d="M8 4.5c.9 0 1.6.3 2.2.9l1.6-1.6C10.9 2.8 9.6 2.2 8 2.2 5.7 2.2 3.8 3.4 2.8 5.4l1.9 1.5C5.2 5.5 6.5 4.5 8 4.5z" fill="#ea4335"/></svg>
<svg class="a" style="left:1644px;top:10px" width="16" height="16" viewBox="0 0 16 16"><circle cx="8" cy="8" r="8" fill="#fff"/><path d="M13.6 8.1c0-.4 0-.8-.1-1.2H8v2.3h3.2c-.1.8-.6 1.4-1.2 1.8v1.5h1.9c1.1-1 1.7-2.5 1.7-4.4z" fill="#4285f4"/><path d="M8 13.8c1.6 0 2.9-.5 3.9-1.4L10 10.9c-.5.4-1.2.6-2 .6-1.5 0-2.8-1-3.3-2.4H2.8v1.5C3.8 12.6 5.7 13.8 8 13.8z" fill="#34a853"/><path d="M4.7 9.1c-.1-.4-.2-.8-.2-1.1s.1-.8.2-1.1V5.4H2.8C2.4 6.2 2.2 7.1 2.2 8s.2 1.8.6 2.6z" fill="#fbbc05"/><path d="M8 4.5c.9 0 1.6.3 2.2.9l1.6-1.6C10.9 2.8 9.6 2.2 8 2.2 5.7 2.2 3.8 3.4 2.8 5.4l1.9 1.5C5.2 5.5 6.5 4.5 8 4.5z" fill="#ea4335"/></svg>
<svg class="a" style="left:1674px;top:10px" width="16" height="16" viewBox="0 0 16 16"><path d="M8 0.3 L14.8 3.6 L15.5 11.2 L9 15.7 L2 13.5 L0.5 5.5 Z" fill="#f3c21a"/><path d="M3 4 L8 1.2 L13 4z" fill="#f8dc60"/><path d="M6.3 5.2v5.8l5-2.9z" fill="#fff"/></svg>
<svg class="a" style="left:143px;top:13px" width="10" height="10" viewBox="0 0 10 10"><path d="M1 1L9 9M9 1L1 9" stroke="#4a4e52" stroke-width="1.6"/></svg>
<svg class="a" style="left:1713px;top:12px" width="12" height="12" viewBox="0 0 12 12"><path d="M6 0V12M0 6H12" stroke="#494c50" stroke-width="1.7"/></svg>
<div class="a" style="left:1800px;top:7px;width:11px;height:1px;background:#000"></div>
<div class="a" style="left:1846px;top:2px;width:10px;height:10px;border:1px solid #000;box-sizing:border-box"></div>
<svg class="a" style="left:1891px;top:1px" width="13" height="13" viewBox="0 0 13 13"><path d="M1.5 1.5L11 11M11 1.5L1.5 11" stroke="#000" stroke-width="1.1"/></svg>
<div class="a" style="left:0px;top:35px;width:1920px;height:35px;background:#fff"></div>
<svg class="a" style="left:14px;top:45px" width="16" height="16" viewBox="0 0 16 16"><path d="M15 8H2.5M8.5 2L2.5 8l6 6" fill="none" stroke="#5f6368" stroke-width="1.8"/></svg>
<svg class="a" style="left:46px;top:45px" width="16" height="16" viewBox="0 0 16 16"><path d="M1 8H13.5M7.5 2l6 6-6 6" fill="none" stroke="#bdc1c6" stroke-width="1.8"/></svg>
<svg class="a" style="left:78px;top:45px" width="16" height="16" viewBox="0 0 16 16"><path d="M13.5 8.5A5.5 5.5 0 1 1 11.8 4.1" fill="none" stroke="#5f6368" stroke-width="1.8"/><path d="M14.5 1.5V7H9z" fill="#5f6368"/></svg>
<div class="a" style="left:108px;top:39px;width:1334px;height:28px;background:#f1f3f4;border-radius:14px"></div>
<svg class="a" style="left:119px;top:46px" width="14" height="14" viewBox="0 0 14 14"><circle cx="7" cy="7" r="6.2" fill="none" stroke="#5f6368" stroke-width="1.4"/><rect x="6.2" y="6" width="1.6" height="5" fill="#5f6368"/><rect x="6.2" y="3.2" width="1.6" height="1.6" fill="#5f6368"/></svg>
<div class="t " style="left:142px;top:47.00px;font-size:13.5px;color:#5f6368;letter-spacing:0.2px">Не защищено</div>
<div class="a" style="left:239px;top:47px;width:1px;height:13px;background:#5f6368"></div>
<div class="t " style="left:250px;top:47.00px;font-size:13px;color:#202124;letter-spacing:0px">192.168.31.242<span style="color:#6a6e73;letter-spacing:0.58px">/admin.php?pd=cGFuZWw6e2FjdGlvbj14aWFvbWltaWlvfQ%3D%3Dpz_&amp;md=xiaomimiio&amp;inst=adm&amp;data_source=&amp;view_mode=edit_miio_devices&amp;id=3&amp;tab=data</span></div>
<svg class="a" style="left:1416px;top:45px" width="17" height="16" viewBox="0 0 17 16"><path d="M8.5 1.5l2 4.6 5 .5-3.8 3.3 1.1 4.9-4.3-2.6-4.3 2.6 1.1-4.9L1.5 6.6l5-.5z" fill="none" stroke="#5f6368" stroke-width="1.4" stroke-linejoin="round"/></svg>
<svg class="a" style="left:1459px;top:45px" width="16" height="16" viewBox="0 0 16 16"><circle cx="8" cy="7.5" r="7" fill="#7d62a8"/><path d="M4 14l1-3" stroke="#7d62a8" stroke-width="2"/><path d="M5.5 4.5c0 3 3 6 6 6l.8-1.3-1.8-1-1 .8c-1-.5-2-1.5-2.5-2.5l.8-1-1-1.8z" fill="#fff"/></svg>
<svg class="a" style="left:1491px;top:45px" width="16" height="16" viewBox="0 0 16 16"><path d="M3 15V7a5 5 0 0 1 10 0v8l-2-1.5-1.5 1.5-1.5-1.5-1.5 1.5-1.5-1.5z" fill="#3fa9f5"/><circle cx="6.3" cy="6.5" r=".9" fill="#fff"/><circle cx="9.7" cy="6.5" r=".9" fill="#fff"/><path d="M5.8 9q2.2 2 4.4 0" fill="none" stroke="#fff" stroke-width=".8"/></svg>
<svg class="a" style="left:1522px;top:45px" width="16" height="16" viewBox="0 0 16 16"><path d="M5 0.5h6l4.5 4.5v6l-4.5 4.5h-6l-4.5-4.5v-6z" fill="#c70d1a"/><text x="8" y="10.6" font-size="6.6" font-family="Liberation Sans" font-weight="bold" text-anchor="middle" fill="#fff" letter-spacing="-0.3">ABP</text></svg>
<svg class="a" style="left:1554px;top:45px" width="16" height="16" viewBox="0 0 16 16"><rect x="0" y="0" width="16" height="16" fill="#e52d27"/><text x="8" y="12.5" font-size="10" font-family="Liberation Sans" font-weight="bold" text-anchor="middle" fill="#fff">Yt</text></svg>
<svg class="a" style="left:1587px;top:45px" width="16" height="16" viewBox="0 0 16 16"><ellipse cx="8" cy="7" rx="7.5" ry="5.5" fill="#f7b733"/><path d="M8 4.2v5.6M5.2 7h5.6" stroke="#fff" stroke-width="1.8"/><path d="M3 14h10" stroke="#f7d090" stroke-width="1.5"/></svg>
<svg class="a" style="left:1619px;top:45px" width="16" height="16" viewBox="0 0 16 16"><path d="M4 1.5L0.5 4 4 6.5 0.5 9 4 11.5 8 9 12 11.5 15.5 9 12 6.5 15.5 4 12 1.5 8 4z M8 4L4 6.5 8 9 12 6.5z M4 12.5L8 15 12 12.5 8 10z" fill="#0061fe"/></svg>
<svg class="a" style="left:1649px;top:45px" width="16" height="16" viewBox="0 0 16 16"><path d="M3 1.5h10l-8 13H2.5z" fill="#f5d400"/><path d="M10.5 4.5q-2.5 5-2 8.5 .3 1 1.8.2" fill="none" stroke="#111" stroke-width="1.9"/></svg>
<svg class="a" style="left:1683px;top:45px" width="16" height="16" viewBox="0 0 16 16"><path d="M8 2.5 Q5.5 2.5 6 5.5 Q6.8 8.5 2 13.5 L4 14.5 Q8 10 9.2 7 Q10.2 4.5 8 2.5z M8 2.5 Q10.5 2.5 10 5.5 Q9.6 8 14 13.5 L12 14.5 Q9 11 8 9" fill="none" stroke="#1565d8" stroke-width="1.9" stroke-linejoin="round"/></svg>
<svg class="a" style="left:1714px;top:45px" width="16" height="16" viewBox="0 0 16 16"><path d="M7 1.5l5 2.8v5.5l-5 2.8-5-2.8V4.3z" fill="none" stroke="#444" stroke-width="1.3"/><path d="M4.5 5v4M7 4v6M9.5 5v4" stroke="#444" stroke-width="1"/><path d="M11 11l4 4" stroke="#222" stroke-width="2"/></svg>
<svg class="a" style="left:1747px;top:45px" width="16" height="16" viewBox="0 0 16 16"><circle cx="8" cy="8" r="7.2" fill="none" stroke="#ccc" stroke-width="1.2"/><path d="M4.5 12L8 3.5 11.5 12M5.8 9h4.4" fill="none" stroke="#ccc" stroke-width="1.3"/></svg>
<svg class="a" style="left:1779px;top:45px" width="16" height="16" viewBox="0 0 16 16"><path d="M9 1.5v10" stroke="#f00" stroke-width="2"/><circle cx="6" cy="12.3" r="3.2" fill="#f00"/><path d="M9 1.5l4.5 1.5v3L9 5z" fill="#f00"/></svg>
<svg class="a" style="left:1811px;top:45px" width="16" height="16" viewBox="0 0 16 16"><ellipse cx="8" cy="6" rx="6" ry="4.5" fill="#a0522d"/><path d="M2 10l6 5 6-5" fill="#8aa0c0"/><path d="M10 8l5 6" stroke="#ffcc44" stroke-width="2"/></svg>
<div class="a" style="left:1501px;top:55px;width:12px;height:12px;background:#2a0a30;border-radius:2px"></div>
<div class="t " style="left:1504px;top:57.00px;font-size:10px;color:#fff;font-weight:bold">0</div>
<div class="a" style="left:1843px;top:45px;width:1px;height:15px;background:#dadce0"></div>
<div class="a" style="left:1856px;top:43px;width:20px;height:20px;border-radius:50%;background:radial-gradient(circle at 45% 45%,#a08068 0,#5a4638 40%,#2e2a26 75%,#4a5a50 100%)"></div>
<div class="a" style="left:1897px;top:47px;width:3px;height:3px;background:#5f6368;border-radius:50%"></div>
<div class="a" style="left:1897px;top:52px;width:3px;height:3px;background:#5f6368;border-radius:50%"></div>
<div class="a" style="left:1897px;top:57px;width:3px;height:3px;background:#5f6368;border-radius:50%"></div>
<div class="a" style="left:0px;top:70px;width:1920px;height:32px;background:#fff"></div>
<div class="a" style="left:0px;top:102px;width:1920px;height:1px;background:#c4c4c4"></div>
<svg class="a" style="left:15px;top:78px" width="13" height="13" viewBox="0 0 13 13"><rect x="0" y="0" width="3" height="3" fill="#ea4335"/><rect x="5" y="0" width="3" height="3" fill="#ea4335"/><rect x="10" y="0" width="3" height="3" fill="#ea4335"/><rect x="0" y="5" width="3" height="3" fill="#34a853"/><rect x="5" y="5" width="3" height="3" fill="#4285f4"/><rect x="10" y="5" width="3" height="3" fill="#fbbc05"/><rect x="0" y="10" width="3" height="3" fill="#34a853"/><rect x="5" y="10" width="3" height="3" fill="#fbbc05"/><rect x="10" y="10" width="3" height="3" fill="#fbbc05"/></svg>
<div class="t " style="left:38px;top:79.00px;font-size:12px;color:#3c4043;">Приложения</div>
<svg class="a" style="left:126px;top:77px" width="16" height="16" viewBox="0 0 16 16"><rect x="0" y="0" width="16" height="16" fill="#054d38"/><rect x="4" y="3" width="3" height="10" fill="#fff"/><rect x="4" y="3" width="8" height="3" fill="#fff"/><rect x="8" y="7" width="3" height="3" fill="#fff"/></svg>
<div class="t fade" style="left:150px;top:79px;font-size:12px;color:#3c4043;width:113px">Комфортные размер</div>
<svg class="a" style="left:280px;top:77px" width="16" height="16" viewBox="0 0 16 16"><ellipse cx="8" cy="8" rx="7" ry="7.5" fill="#d0dcf0"/><circle cx="8" cy="8" r="4.5" fill="#5a86d0"/><path d="M6.5 5.5v3a1.5 1.5 0 0 0 3 0v-3" fill="none" stroke="#fff" stroke-width="1"/></svg>
<div class="t fade" style="left:304px;top:79px;font-size:12px;color:#3c4043;width:113px">А.В.Хомич - Психоло</div>
<svg class="a" style="left:434px;top:77px" width="16" height="16" viewBox="0 0 16 16"><rect x="0" y="0" width="7.5" height="7.5" rx="1.5" fill="#7cc04a"/><rect x="8.5" y="0" width="7.5" height="7.5" rx="1.5" fill="#3a9ad0"/><rect x="0" y="8.5" width="7.5" height="7.5" rx="1.5" fill="#e03a2a"/><rect x="8.5" y="8.5" width="7.5" height="7.5" rx="1.5" fill="#f0a020"/></svg>
<div class="t fade" style="left:458px;top:79px;font-size:12px;color:#3c4043;width:113px">Ивановская барахол</div>
<svg class="a" style="left:588px;top:77px" width="16" height="16" viewBox="0 0 16 16"><rect x="0.5" y="0.5" width="15" height="15" fill="#f8f0d0" stroke="#b08a30"/><circle cx="8" cy="8" r="4.5" fill="none" stroke="#d8b030" stroke-width="1.5"/></svg>
<svg class="a" style="left:620px;top:77px" width="16" height="16" viewBox="0 0 16 16"><rect x="0" y="0" width="16" height="16" rx="2" fill="#168de2"/><text x="8" y="12.8" font-size="13" font-family="Liberation Sans" font-weight="bold" text-anchor="middle" fill="#ffa930">@</text></svg>
<div class="t fade" style="left:644px;top:79px;font-size:12px;color:#3c4043;width:112px">volkov.a72@mail.ru -</div>
<svg class="a" style="left:773px;top:77px" width="16" height="16" viewBox="0 0 16 16"><path d="M8 9L1 1Q0 9 5 10Q4 15 8 13z" fill="#2aa0e0"/><path d="M8 9L15 4Q16 11 11 11Q11 15 8 13z" fill="#60c0f0"/></svg>
<div class="t fade" style="left:798px;top:79px;font-size:12px;color:#3c4043;width:113px">Торрент портал :: NN</div>
<svg class="a" style="left:927px;top:77px" width="16" height="16" viewBox="0 0 16 16"><circle cx="5" cy="11" r="4.5" fill="#e02020"/><text x="5" y="14" font-size="7" font-family="Liberation Sans" font-weight="bold" text-anchor="middle" fill="#fff">A</text><circle cx="11" cy="5" r="4.5" fill="#444"/><text x="11" y="8" font-size="6" font-family="Liberation Sans" text-anchor="middle" fill="#fff">5</text></svg>
<div class="t " style="left:952px;top:79px;font-size:12px;color:#3c4043;width:46px">Словари</div>
<svg class="a" style="left:1016px;top:77px" width="16" height="16" viewBox="0 0 16 16"><ellipse cx="8" cy="9" rx="7.5" ry="4" fill="#1a73e8" transform="rotate(-15 8 9)"/><ellipse cx="9" cy="7" rx="5" ry="2.5" fill="#9fd0ff" transform="rotate(-15 8 9)"/></svg>
<div class="t " style="left:1040px;top:79px;font-size:12px;color:#3c4043;width:27px">Диск</div>
<svg class="a" style="left:1084px;top:77px" width="16" height="16" viewBox="0 0 16 16"><ellipse cx="8" cy="8" rx="7" ry="5.5" fill="none" stroke="#1a3a8a" stroke-width="1.5"/><path d="M5.5 4.5L4.5 11.5M11.5 4.5L10.5 11.5M5 8h6" stroke="#1a3a8a" stroke-width="1.5"/></svg>
<div class="t fade" style="left:1107px;top:79px;font-size:12px;color:#3c4043;width:113px">Рулевая рейка. - HYU</div>
<svg class="a" style="left:1238px;top:77px" width="16" height="16" viewBox="0 0 16 16"><circle cx="8" cy="8" r="7" fill="#c04050"/><path d="M3 12Q8 4 13 12" fill="#4a9a4a"/></svg>
<div class="t fade" style="left:1261px;top:79px;font-size:12px;color:#3c4043;width:113px">МК. Готовимся к пра</div>
<svg class="a" style="left:1391px;top:77px" width="16" height="16" viewBox="0 0 16 16"><rect x="0" y="0" width="7.5" height="7.5" rx="1.5" fill="#7cc04a"/><rect x="8.5" y="0" width="7.5" height="7.5" rx="1.5" fill="#3a9ad0"/><rect x="0" y="8.5" width="7.5" height="7.5" rx="1.5" fill="#e03a2a"/><rect x="8.5" y="8.5" width="7.5" height="7.5" rx="1.5" fill="#f0a020"/></svg>
<div class="t fade" style="left:1415px;top:79px;font-size:12px;color:#3c4043;width:113px">Ивановская барахол</div>
<svg class="a" style="left:1546px;top:77px" width="16" height="16" viewBox="0 0 16 16"><circle cx="7" cy="8" r="7" fill="#555"/><circle cx="7" cy="8" r="4.5" fill="#ddd"/><circle cx="7" cy="8" r="3" fill="#333"/></svg>
<div class="t " style="left:1569px;top:79px;font-size:12px;color:#3c4043;width:60px">IP Webcam</div>
<svg class="a" style="left:1759px;top:82px" width="11" height="9" viewBox="0 0 11 9"><path d="M1 1l3.5 3.5L1 8M6 1l3.5 3.5L6 8" fill="none" stroke="#5f6368" stroke-width="1.5"/></svg>
<div class="a" style="left:1779px;top:77px;width:1px;height:17px;background:#dadce0"></div>
<svg class="a" style="left:1791px;top:77px" width="14" height="16" viewBox="0 0 14 16"><path d="M1 1h6l2 2h4v12H1z" fill="#fbe08a" stroke="#e8c050" stroke-width=".8"/></svg>
<div class="t " style="left:1814px;top:79.00px;font-size:12px;color:#3c4043;">Другие закладки</div>
<div class="a" style="left:357px;top:183px;width:1546px;height:1px;background:#ddd"></div>
<div class="a" style="left:437px;top:140px;width:83px;height:44px;background:#fff;border:1px solid #ddd;border-bottom-color:transparent;border-radius:4px 4px 0 0;box-sizing:border-box"></div>
<div class="t " style="left:374px;top:156.00px;font-size:14px;color:#428bca;">Общее</div>
<div class="t " style="left:453px;top:156.00px;font-size:14px;color:#555;">Данные</div>
<div class="t " style="left:537.5px;top:156.00px;font-size:14px;color:#428bca;">Справка</div>
<div class="a" style="left:342px;top:224px;width:1561px;height:1px;background:#ddd"></div>
<div class="a" style="left:342px;top:263px;width:1561px;height:1px;background:#ddd"></div>
<div class="a" style="left:342px;top:308px;width:1561px;height:1px;background:#ddd"></div>
<div class="a" style="left:342px;top:353px;width:1561px;height:1px;background:#ddd"></div>
<div class="a" style="left:342px;top:398px;width:1561px;height:1px;background:#ddd"></div>
<div class="t " style="left:351px;top:236.00px;font-size:16px;color:#333;">Название</div>
<div class="t " style="left:459px;top:236.00px;font-size:16px;color:#333;">Значение</div>
<div class="t " style="left:699px;top:236.00px;font-size:16px;color:#333;">Устройство</div>
<div class="t " style="left:821px;top:236.00px;font-size:16px;color:#333;">Связанный объект</div>
<div class="t " style="left:1109px;top:236.00px;font-size:16px;color:#333;">Связанное св-во</div>
<div class="t " style="left:1381px;top:236.00px;font-size:16px;color:#333;">Метод</div>
<div class="t " style="left:1653px;top:236.00px;font-size:16px;color:#333;">Обновлено</div>
<div class="t " style="left:351px;top:275.00px;font-size:16px;color:#333;">online</div>
<div class="t " style="left:459px;top:275.00px;font-size:16px;color:#333;">1</div>
<div class="t " style="left:699px;top:275.00px;font-size:16px;color:#428bca;">Добавить</div>
<div class="a" style="left:821px;top:272px;width:200px;height:26px;box-sizing:border-box;border:1px solid #aaa;border-radius:4px;background:linear-gradient(#fff 50%,#eee)"></div>
<div class="a" style="left:1002px;top:273px;width:18px;height:24px;box-sizing:border-box;border-left:1px solid #aaa;border-radius:0 4px 4px 0;background:linear-gradient(#eee,#ccc)"></div>
<svg class="a" style="left:1008px;top:282.5px" width="6" height="5" viewBox="0 0 6 5"><path d="M0 0h6L3 4.5z" fill="#888"/></svg>
<div class="t " style="left:830px;top:278.00px;font-size:16px;color:#999;">Связанный объект</div>
<div class="a" style="left:1109px;top:272px;width:200px;height:21px;box-sizing:border-box;border:1px solid #a9a9a9;border-radius:2px;background:#fff;"></div>
<svg class="a" style="left:1296px;top:279px" width="7" height="6" viewBox="0 0 7 6"><path d="M0.2 0.2h6.2L3.3 5.6z" fill="#000"/></svg>
<div class="a" style="left:1381px;top:272px;width:200px;height:21px;box-sizing:border-box;border:1px solid #a9a9a9;border-radius:2px;background:#fff;"></div>
<svg class="a" style="left:1568px;top:279px" width="7" height="6" viewBox="0 0 7 6"><path d="M0.2 0.2h6.2L3.3 5.6z" fill="#000"/></svg>
<div class="t " style="left:1653px;top:275.00px;font-size:16px;color:#333;">2019-01-10 21:36:55</div>
<div class="a" style="left:1856px;top:272px;width:40px;height:28px;box-sizing:border-box;border:1px solid #ccc;border-radius:4px;background:#fff"></div>
<svg class="a" style="left:1870px;top:282px" width="12" height="12" viewBox="0 0 12 12"><path d="M1.8 1.8l8.4 8.4M10.2 1.8l-8.4 8.4" stroke="#333" stroke-width="3.2"/></svg>
<div class="t " style="left:351px;top:320.00px;font-size:16px;color:#333;">command</div>
<div class="t " style="left:699px;top:320.00px;font-size:16px;color:#428bca;">Добавить</div>
<div class="a" style="left:821px;top:317px;width:200px;height:26px;box-sizing:border-box;border:1px solid #aaa;border-radius:4px;background:linear-gradient(#fff 50%,#eee)"></div>
<div class="a" style="left:1002px;top:318px;width:18px;height:24px;box-sizing:border-box;border-left:1px solid #aaa;border-radius:0 4px 4px 0;background:linear-gradient(#eee,#ccc)"></div>
<svg class="a" style="left:1008px;top:327.5px" width="6" height="5" viewBox="0 0 6 5"><path d="M0 0h6L3 4.5z" fill="#888"/></svg>
<div class="t " style="left:830px;top:323.00px;font-size:16px;color:#999;">Связанный объект</div>
<div class="a" style="left:1109px;top:317px;width:200px;height:21px;box-sizing:border-box;border:1px solid #a9a9a9;border-radius:2px;background:#fff;"></div>
<svg class="a" style="left:1296px;top:324px" width="7" height="6" viewBox="0 0 7 6"><path d="M0.2 0.2h6.2L3.3 5.6z" fill="#000"/></svg>
<div class="a" style="left:1381px;top:317px;width:200px;height:21px;box-sizing:border-box;border:1px solid #a9a9a9;border-radius:2px;background:#fff;"></div>
<svg class="a" style="left:1568px;top:324px" width="7" height="6" viewBox="0 0 7 6"><path d="M0.2 0.2h6.2L3.3 5.6z" fill="#000"/></svg>
<div class="t " style="left:1653px;top:320.00px;font-size:16px;color:#333;">2019-01-08 08:34:11</div>
<div class="a" style="left:1856px;top:317px;width:40px;height:28px;box-sizing:border-box;border:1px solid #ccc;border-radius:4px;background:#fff"></div>
<svg class="a" style="left:1870px;top:327px" width="12" height="12" viewBox="0 0 12 12"><path d="M1.8 1.8l8.4 8.4M10.2 1.8l-8.4 8.4" stroke="#333" stroke-width="3.2"/></svg>
<div class="t " style="left:351px;top:365.00px;font-size:16px;color:#333;">message</div>
<div class="t " style="left:699px;top:365.00px;font-size:16px;color:#428bca;">Добавить</div>
<div class="a" style="left:821px;top:362px;width:200px;height:26px;box-sizing:border-box;border:1px solid #aaa;border-radius:4px;background:linear-gradient(#fff 50%,#eee)"></div>
<div class="a" style="left:1002px;top:363px;width:18px;height:24px;box-sizing:border-box;border-left:1px solid #aaa;border-radius:0 4px 4px 0;background:linear-gradient(#eee,#ccc)"></div>
<svg class="a" style="left:1008px;top:372.5px" width="6" height="5" viewBox="0 0 6 5"><path d="M0 0h6L3 4.5z" fill="#888"/></svg>
<div class="t " style="left:830px;top:368.00px;font-size:16px;color:#999;">Связанный объект</div>
<div class="a" style="left:1109px;top:362px;width:200px;height:21px;box-sizing:border-box;border:1px solid #a9a9a9;border-radius:2px;background:#fff;"></div>
<svg class="a" style="left:1296px;top:369px" width="7" height="6" viewBox="0 0 7 6"><path d="M0.2 0.2h6.2L3.3 5.6z" fill="#000"/></svg>
<div class="a" style="left:1381px;top:362px;width:200px;height:21px;box-sizing:border-box;border:1px solid #a9a9a9;border-radius:2px;background:#fff;"></div>
<svg class="a" style="left:1568px;top:369px" width="7" height="6" viewBox="0 0 7 6"><path d="M0.2 0.2h6.2L3.3 5.6z" fill="#000"/></svg>
<div class="t " style="left:1653px;top:365.00px;font-size:16px;color:#333;">2019-01-08 08:34:11</div>
<div class="a" style="left:1856px;top:362px;width:40px;height:28px;box-sizing:border-box;border:1px solid #ccc;border-radius:4px;background:#fff"></div>
<svg class="a" style="left:1870px;top:372px" width="12" height="12" viewBox="0 0 12 12"><path d="M1.8 1.8l8.4 8.4M10.2 1.8l-8.4 8.4" stroke="#333" stroke-width="3.2"/></svg>
<div class="t " style="left:351px;top:410.00px;font-size:16px;color:#333;">ir_play</div>
<div class="t " style="left:699px;top:410.00px;font-size:16px;color:#428bca;">Добавить</div>
<div class="a" style="left:821px;top:407px;width:200px;height:26px;box-sizing:border-box;border:1px solid #aaa;border-radius:4px;background:linear-gradient(#fff 50%,#eee)"></div>
<div class="a" style="left:1002px;top:408px;width:18px;height:24px;box-sizing:border-box;border-left:1px solid #aaa;border-radius:0 4px 4px 0;background:linear-gradient(#eee,#ccc)"></div>
<svg class="a" style="left:1008px;top:417.5px" width="6" height="5" viewBox="0 0 6 5"><path d="M0 0h6L3 4.5z" fill="#888"/></svg>
<div class="t " style="left:830px;top:413.00px;font-size:16px;color:#444;">MiIRRemote360</div>
<svg class="a" style="left:985px;top:419px" width="8" height="8" viewBox="0 0 8 8"><path d="M1 1l6 6M7 1L1 7" stroke="#888" stroke-width="2.2"/></svg>
<div class="t " style="left:1025px;top:411.00px;font-size:16px;color:#428bca;">#</div>
<div class="a" style="left:1109px;top:407px;width:200px;height:21px;box-sizing:border-box;border:1px solid #4d90fe;border-radius:2px;background:#fff;box-shadow:0 0 0 1px #9ec0f8"></div>
<svg class="a" style="left:1296px;top:414px" width="7" height="6" viewBox="0 0 7 6"><path d="M0.2 0.2h6.2L3.3 5.6z" fill="#000"/></svg>
<div class="a" style="left:1381px;top:407px;width:200px;height:21px;box-sizing:border-box;border:1px solid #a9a9a9;border-radius:2px;background:#fff;"></div>
<svg class="a" style="left:1568px;top:414px" width="7" height="6" viewBox="0 0 7 6"><path d="M0.2 0.2h6.2L3.3 5.6z" fill="#000"/></svg>
<div class="t " style="left:1653px;top:410.00px;font-size:16px;color:#333;">2019-01-08 08:34:11</div>
<div class="a" style="left:1856px;top:407px;width:40px;height:28px;box-sizing:border-box;border:1px solid #ccc;border-radius:4px;background:#fff"></div>
<svg class="a" style="left:1870px;top:417px" width="12" height="12" viewBox="0 0 12 12"><path d="M1.8 1.8l8.4 8.4M10.2 1.8l-8.4 8.4" stroke="#333" stroke-width="3.2"/></svg>
<div class="a" style="left:1109px;top:427px;width:200px;height:24px;background:#fff;border:1px solid #6d8bc8;box-sizing:border-box"></div>
<div class="a" style="left:1110px;top:428px;width:198px;height:21px;background:#1e90ff"></div>
<div class="a" style="left:751px;top:478px;width:96px;height:34px;background:#428bca;border:1px solid #357ebd;border-radius:4px;box-sizing:border-box"></div>
<div class="t " style="left:764px;top:488.00px;font-size:14px;color:#fff;">Сохранить</div>
<div class="a" style="left:851px;top:478px;width:66px;height:34px;background:#fff;border:1px solid #ccc;border-radius:4px;box-sizing:border-box"></div>
<div class="t " style="left:864.5px;top:488.00px;font-size:14px;color:#333;">Назад</div>
<div class="a" style="left:0px;top:159px;width:316px;height:815px;background:#f5f5f5"></div>
<div class="a" style="left:316px;top:159px;width:1px;height:815px;background:#e3e3e3"></div>
<div class="a" style="left:10px;top:140px;width:297px;height:213px;background:#fff;border:1px solid #ddd;border-radius:4px;box-sizing:border-box;box-shadow:0 1px 1px rgba(0,0,0,.05)"></div>
<div class="a" style="left:10px;top:358px;width:297px;height:310px;background:#fff;border:1px solid #ddd;border-radius:4px;box-sizing:border-box;box-shadow:0 1px 1px rgba(0,0,0,.05)"></div>
<div class="a" style="left:11px;top:359px;width:295px;height:37px;background:#f5f5f5;border-radius:3px 3px 0 0"></div>
<div class="a" style="left:11px;top:396px;width:295px;height:1px;background:#ddd"></div>
<div class="t " style="left:26px;top:370.00px;font-size:16px;color:#333;">Устройства</div>
<div class="a" style="left:10px;top:674px;width:297px;height:400px;background:#fff;border:1px solid #ddd;border-radius:4px;box-sizing:border-box;box-shadow:0 1px 1px rgba(0,0,0,.05)"></div>
<div class="a" style="left:11px;top:675px;width:295px;height:36px;background:#f5f5f5;border-radius:3px 3px 0 0"></div>
<div class="a" style="left:11px;top:711px;width:295px;height:1px;background:#ddd"></div>
<div class="t " style="left:26px;top:685.00px;font-size:16px;color:#333;">Приложения</div>
<div class="a" style="left:16px;top:562px;width:285px;height:30px;background:#0088cc"></div>
<svg class="a" style="left:31px;top:160px" width="24" height="24" viewBox="0 0 24 24"><defs><radialGradient id="g1" cx="35%" cy="30%" r="70%"><stop offset="0" stop-color="#9fe8ff"/><stop offset=".5" stop-color="#3a7ad8"/><stop offset="1" stop-color="#1a2a8a"/></radialGradient></defs><circle cx="12" cy="11.5" r="10.5" fill="url(#g1)"/><path d="M3 15q9 5 18-2" fill="none" stroke="#c0e8ff" stroke-width="1.2"/></svg>
<div class="t " style="left:59px;top:164.00px;font-size:14px;color:#428bca;">Объекты</div>
<svg class="a" style="left:31px;top:190px" width="24" height="24" viewBox="0 0 24 24"><rect x="0" y="0" width="24" height="24" rx="5" fill="#c8c8cc"/><path d="M12 4 L19 7.3 V16.5 H15.3 L14.5 19.3 L13 16.5 H5 V7.3 Z" fill="none" stroke="#fff" stroke-width="1.2" stroke-linejoin="round"/><text x="12" y="15" font-size="8.6" font-family="Liberation Sans" font-weight="bold" text-anchor="middle" fill="#fff">M</text></svg>
<div class="t " style="left:59px;top:194.00px;font-size:14px;color:#428bca;">Шаблоны поведения</div>
<svg class="a" style="left:31px;top:220px" width="24" height="24" viewBox="0 0 24 24"><rect x="0" y="0" width="24" height="24" rx="5" fill="#4aa8e0"/><rect x="9" y="6" width="9" height="8" fill="none" stroke="#fff" stroke-width="1.5"/><rect x="6" y="10" width="9" height="8" fill="none" stroke="#fff" stroke-width="1.5"/></svg>
<div class="t " style="left:59px;top:224.00px;font-size:14px;color:#428bca;">Сцены</div>
<svg class="a" style="left:31px;top:250px" width="24" height="24" viewBox="0 0 24 24"><rect x="1" y="1" width="18" height="21" fill="#f8f8f8" stroke="#ccc" stroke-width=".8"/><rect x="1" y="1" width="18" height="2.5" fill="#62c6ee"/><path d="M8 6h6v2H8zM4 10h4v2H4zM12 9.5v3M6 12v4M3.5 17l2-2 2 2" fill="none" stroke="#999" stroke-width=".7"/><rect x="9" y="13" width="14" height="10" fill="#7fd0f2"/><path d="M10.5 15.5h11M10.5 18h11M10.5 20.5h11" stroke="#c8ecfa" stroke-width=".8" stroke-dasharray="1.2 1.4"/></svg>
<div class="t " style="left:59px;top:254.00px;font-size:14px;color:#428bca;">Сценарии</div>
<svg class="a" style="left:31px;top:280px" width="24" height="24" viewBox="0 0 24 24"><circle cx="12" cy="14" r="9.4" fill="none" stroke="#8a8a8a" stroke-width="3" stroke-dasharray="3.2 1.6"/><circle cx="12" cy="14" r="8.3" fill="#c8c8c8"/><circle cx="12" cy="14" r="8.3" fill="none" stroke="#555" stroke-width=".8"/><defs><radialGradient id="g2" cx="40%" cy="30%" r="70%"><stop offset="0" stop-color="#bfeaff"/><stop offset=".55" stop-color="#2d8de0"/><stop offset="1" stop-color="#1a66c0"/></radialGradient></defs><circle cx="12.5" cy="10.5" r="8.5" fill="url(#g2)"/></svg>
<div class="t " style="left:59px;top:284.00px;font-size:14px;color:#428bca;">Веб-переменные</div>
<svg class="a" style="left:31px;top:310px" width="24" height="24" viewBox="0 0 24 24"><rect x="0" y="0" width="24" height="24" rx="5" fill="#4aa3de"/><rect x="5" y="18.5" width="13" height="1.4" fill="#dff0fa"/><rect x="5" y="12" width="1.5" height="5" fill="#dff0fa"/><rect x="9" y="8.4" width="1.5" height="8.6" fill="#dff0fa"/><rect x="13" y="11" width="1.5" height="6" fill="#dff0fa"/><rect x="17" y="5.8" width="1.5" height="11.2" fill="#dff0fa"/></svg>
<div class="t " style="left:59px;top:314.00px;font-size:14px;color:#428bca;">Графики</div>
<svg class="a" style="left:31px;top:415px" width="24" height="24" viewBox="0 0 24 24"><defs><linearGradient id="g3" x1="0" y1="0" x2="1" y2="1"><stop offset="0" stop-color="#2a7ae0"/><stop offset="1" stop-color="#0a3a8a"/></linearGradient></defs><rect x="1" y="1" width="22" height="22" rx="4" fill="url(#g3)"/><path d="M8 8l8 7-4 3.5V5.5L16 9 8 16" fill="none" stroke="#fff" stroke-width="1.6"/></svg>
<div class="t " style="left:59px;top:419.00px;font-size:14px;color:#428bca;">Bluetooth-устройства</div>
<svg class="a" style="left:31px;top:445px" width="24" height="24" viewBox="0 0 24 24"><rect x="2.5" y="2.5" width="19" height="19" rx="1.5" fill="#6d5f83"/><path d="M7 15.5h10a2.5 2.5 0 0 0-.5-5 3.5 3.5 0 0 0-6.8-1 2.6 2.6 0 0 0-2.7 6z" fill="#fff"/><rect x="8.5" y="12.3" width="7" height="1.2" fill="#6d5f83"/></svg>
<div class="t " style="left:59px;top:449.00px;font-size:14px;color:#428bca;">MQTT</div>
<svg class="a" style="left:31px;top:475px" width="24" height="24" viewBox="0 0 24 24"><defs><radialGradient id="g4" cx="50%" cy="35%" r="60%"><stop offset="0" stop-color="#8fe88f"/><stop offset="1" stop-color="#1a8a1a"/></radialGradient></defs><circle cx="12" cy="12" r="11.5" fill="url(#g4)"/><circle cx="12" cy="12" r="4" fill="#0a6a0a"/></svg>
<div class="t " style="left:59px;top:479.00px;font-size:14px;color:#428bca;">Устройства Online</div>
<svg class="a" style="left:31px;top:505px" width="24" height="24" viewBox="0 0 24 24"><rect x="0" y="0" width="24" height="24" rx="5" fill="#c8c8cc"/><path d="M12 4 L19 7.3 V16.5 H15.3 L14.5 19.3 L13 16.5 H5 V7.3 Z" fill="none" stroke="#fff" stroke-width="1.2" stroke-linejoin="round"/><text x="12" y="15" font-size="8.6" font-family="Liberation Sans" font-weight="bold" text-anchor="middle" fill="#fff">M</text></svg>
<div class="t " style="left:59px;top:509.00px;font-size:14px;color:#428bca;">Noolite</div>
<svg class="a" style="left:31px;top:535px" width="24" height="24" viewBox="0 0 24 24"><rect x="0" y="0" width="24" height="24" rx="4" fill="#45ad7a"/><path d="M7 13.5 V7 L9.5 9 H14.5 L17 7 V13.5 A5 5 0 0 1 8.5 17.3" fill="none" stroke="#fff" stroke-width="1.8"/></svg>
<div class="t " style="left:59px;top:539.00px;font-size:14px;color:#428bca;">Xiaomi Home</div>
<svg class="a" style="left:31px;top:565px" width="24" height="24" viewBox="0 0 24 24"><rect x="1" y="1" width="22" height="22" rx="2" fill="#f37021"/><path d="M4 12L12 4.5 20 12M6.5 11v8h11v-8" fill="#fff" stroke="#fff" stroke-width="1"/><text x="12" y="18.5" font-size="7" font-family="Liberation Sans" font-weight="bold" text-anchor="middle" fill="#f37021">mi</text></svg>
<div class="t " style="left:59px;top:569.00px;font-size:14px;color:#fff;">Xiaomi miIO</div>
<svg class="a" style="left:31px;top:595px" width="24" height="24" viewBox="0 0 24 24"><rect x="0" y="0" width="24" height="24" rx="5" fill="#2a7af0"/><path d="M8.5 7.5a6 6 0 1 0 7 0" fill="none" stroke="#fff" stroke-width="2.2"/><path d="M12 4v7" stroke="#fff" stroke-width="2.2"/></svg>
<div class="t " style="left:59px;top:599.00px;font-size:14px;color:#428bca;">Простые устройства</div>
<svg class="a" style="left:31px;top:625px" width="24" height="24" viewBox="0 0 24 24"><rect x="1" y="1" width="22" height="22" rx="3" fill="#f0444a"/><path d="M6 10l6 3 6-3-2 5h-8z" fill="#fff"/></svg>
<div class="t " style="left:59px;top:629.00px;font-size:14px;color:#428bca;">Устройства Yeelight</div>
<svg class="a" style="left:31px;top:730px" width="24" height="24" viewBox="0 0 24 24"><rect x="0" y="0" width="24" height="24" rx="5" fill="#f0284a"/><path d="M9 17V7l8-2v10" fill="none" stroke="#fff" stroke-width="1.6"/><circle cx="7" cy="17" r="2.2" fill="none" stroke="#fff" stroke-width="1.4"/><circle cx="15" cy="15" r="2.2" fill="none" stroke="#fff" stroke-width="1.4"/></svg>
<div class="t " style="left:59px;top:734.00px;font-size:14px;color:#428bca;">Медиа</div>
<svg class="a" style="left:31px;top:760px" width="24" height="24" viewBox="0 0 24 24"><rect x="0" y="0" width="24" height="24" rx="5" fill="#f0284a"/><circle cx="12" cy="12" r="8" fill="none" stroke="#fff" stroke-width="1.6"/><path d="M10 8v8l6-4z" fill="none" stroke="#fff" stroke-width="1.5"/></svg>
<div class="t " style="left:59px;top:764.00px;font-size:14px;color:#428bca;">Плеер</div>
<svg class="a" style="left:31px;top:790px" width="24" height="24" viewBox="0 0 24 24"><rect x="0" y="0" width="24" height="24" rx="5" fill="#c8c8cc"/><path d="M12 4 L19 7.3 V16.5 H15.3 L14.5 19.3 L13 16.5 H5 V7.3 Z" fill="none" stroke="#fff" stroke-width="1.2" stroke-linejoin="round"/><text x="12" y="15" font-size="8.6" font-family="Liberation Sans" font-weight="bold" text-anchor="middle" fill="#fff">M</text></svg>
<div class="t " style="left:59px;top:794.00px;font-size:14px;color:#428bca;">Блокнот</div>
<svg class="a" style="left:31px;top:820px" width="24" height="24" viewBox="0 0 24 24"><rect x="0" y="0" width="24" height="24" rx="5" fill="#c8c8cc"/><path d="M12 4 L19 7.3 V16.5 H15.3 L14.5 19.3 L13 16.5 H5 V7.3 Z" fill="none" stroke="#fff" stroke-width="1.2" stroke-linejoin="round"/><text x="12" y="15" font-size="8.6" font-family="Liberation Sans" font-weight="bold" text-anchor="middle" fill="#fff">M</text></svg>
<div class="t " style="left:59px;top:824.00px;font-size:14px;color:#428bca;">Google Calendar</div>
<svg class="a" style="left:31px;top:850px" width="24" height="24" viewBox="0 0 24 24"><rect x="0" y="0" width="24" height="24" rx="5" fill="#2a7af0"/><rect x="5" y="9" width="14" height="10" rx="1" fill="none" stroke="#fff" stroke-width="1.5"/><path d="M7 12h4M7 15h4M6 9l10-4" stroke="#fff" stroke-width="1.3"/><circle cx="15" cy="14" r="1.8" fill="none" stroke="#fff" stroke-width="1.3"/></svg>
<div class="t " style="left:59px;top:854.00px;font-size:14px;color:#428bca;">Radio 101.ru</div>
<svg class="a" style="left:31px;top:880px" width="24" height="24" viewBox="0 0 24 24"><rect x="0" y="0" width="24" height="24" rx="5" fill="#c8c8cc"/><path d="M12 4 L19 7.3 V16.5 H15.3 L14.5 19.3 L13 16.5 H5 V7.3 Z" fill="none" stroke="#fff" stroke-width="1.2" stroke-linejoin="round"/><text x="12" y="15" font-size="8.6" font-family="Liberation Sans" font-weight="bold" text-anchor="middle" fill="#fff">M</text></svg>
<div class="t " style="left:59px;top:884.00px;font-size:14px;color:#428bca;">RHVoice</div>
<svg class="a" style="left:31px;top:910px" width="24" height="24" viewBox="0 0 24 24"><rect x="0" y="0" width="24" height="24" rx="5" fill="#2a4af0"/><path d="M4 20L18 8 12 9 15 4" fill="none" stroke="#fff" stroke-width="2.2"/></svg>
<div class="t " style="left:59px;top:914.00px;font-size:14px;color:#428bca;">SHOUTCast</div>
<svg class="a" style="left:31px;top:940px" width="24" height="24" viewBox="0 0 24 24"><rect x="0" y="0" width="24" height="24" rx="5" fill="#7ac8b0"/><rect x="5" y="6" width="14" height="13" fill="none" stroke="#fff" stroke-width="1.3"/><path d="M5 9.5h14M8 12h1M11 12h1M14 12h1M8 15h1M11 15h1M14 15h1M8 4v3M16 4v3" stroke="#fff" stroke-width="1.3"/></svg>
<div class="t " style="left:59px;top:944.00px;font-size:14px;color:#428bca;">Планировщик</div>
<svg class="a" style="left:31px;top:970px" width="24" height="24" viewBox="0 0 24 24"><rect x="0" y="0" width="24" height="24" rx="5" fill="#8a1a3a"/></svg>
<div class="a" style="left:0px;top:103px;width:1903px;height:55px;background:#f8f8f8"></div>
<div class="a" style="left:0px;top:158px;width:1903px;height:1px;background:#e7e7e7"></div>
<svg class="a" style="left:15px;top:118px" width="22" height="24" viewBox="0 0 22 24"><path d="M11 1.2 L20.8 5.8 V19.3 H17.3 L15.7 23.3 L13.5 19.3 H1.2 V5.8 Z" fill="none" stroke="#3a8fd6" stroke-width="1.6" stroke-linejoin="round"/><text x="11" y="17" font-size="13.5" font-family="Liberation Sans" font-weight="bold" text-anchor="middle" fill="#3a8fd6">M</text></svg>
<div class="a" style="left:67px;top:111px;width:196px;height:34px;background:#fff;border:1px solid #ccc;border-radius:4px;box-sizing:border-box;box-shadow:inset 0 1px 1px rgba(0,0,0,.075)"></div>
<div class="t " style="left:80px;top:121.00px;font-size:14px;color:#999;">Искать</div>
<svg class="a" style="left:292px;top:120px" width="15" height="15" viewBox="0 0 15 15"><path d="M7.5 1L0.5 7.5H2.5V14H6V10H9V14H12.5V7.5H14.5Z" fill="#777"/></svg>
<div class="t " style="left:311px;top:121.00px;font-size:14px;color:#777;">Веб-сайт</div>
<svg class="a" style="left:399px;top:120px" width="15" height="15" viewBox="0 0 15 15"><rect x="0" y="2" width="3" height="3" fill="#777"/><rect x="4" y="2" width="10" height="3" fill="#777"/><rect x="0" y="6" width="3" height="3" fill="#777"/><rect x="4" y="6" width="10" height="3" fill="#777"/><rect x="0" y="10" width="3" height="3" fill="#777"/><rect x="4" y="10" width="10" height="3" fill="#777"/></svg>
<div class="t " style="left:417px;top:121.00px;font-size:14px;color:#777;">Домашние страницы</div>
<svg class="a" style="left:583px;top:120px" width="15" height="15" viewBox="0 0 15 15"><rect x="0" y="2" width="3" height="3" fill="#777"/><rect x="4" y="2" width="10" height="3" fill="#777"/><rect x="0" y="6" width="3" height="3" fill="#777"/><rect x="4" y="6" width="10" height="3" fill="#777"/><rect x="0" y="10" width="3" height="3" fill="#777"/><rect x="4" y="10" width="10" height="3" fill="#777"/></svg>
<div class="t " style="left:601px;top:121.00px;font-size:14px;color:#777;">Приложения</div>
<svg class="a" style="left:713px;top:120px" width="15" height="15" viewBox="0 0 15 15"><rect x="0" y="2" width="3" height="3" fill="#777"/><rect x="4" y="2" width="10" height="3" fill="#777"/><rect x="0" y="6" width="3" height="3" fill="#777"/><rect x="4" y="6" width="10" height="3" fill="#777"/><rect x="0" y="10" width="3" height="3" fill="#777"/><rect x="4" y="10" width="10" height="3" fill="#777"/></svg>
<div class="t " style="left:731px;top:121.00px;font-size:14px;color:#777;">Меню</div>
<svg class="a" style="left:798px;top:120px" width="15" height="15" viewBox="0 0 15 15"><circle cx="7" cy="7.5" r="6" fill="none" stroke="#777" stroke-width="1.8"/><path d="M7 7.5L9.5 4.5" stroke="#777" stroke-width="1.5"/><circle cx="7" cy="7.5" r="1.3" fill="#777"/></svg>
<div class="t " style="left:816px;top:121.00px;font-size:14px;color:#777;">X-Ray</div>
<svg class="a" style="left:887px;top:120px" width="15" height="15" viewBox="0 0 15 15"><path d="M6 0.5L1.5 8H5L3.5 14.5 9 6H5.5L8 0.5z" fill="#777"/></svg>
<div class="t " style="left:903px;top:121.00px;font-size:14px;color:#777;">Консоль</div>
<svg class="a" style="left:987px;top:120px" width="15" height="15" viewBox="0 0 15 15"><circle cx="7" cy="7.5" r="6.5" fill="#777"/><path d="M4 3q2 1 1 3q-2 1-1 3M9 2q1 2 3 2M8 12q2-2 4-1" fill="none" stroke="#f8f8f8" stroke-width="1.2"/></svg>
<div class="t " style="left:1005px;top:121.00px;font-size:14px;color:#777;">MajorDoMo Project</div>
<svg class="a" style="left:1155px;top:120px" width="15" height="15" viewBox="0 0 15 15"><path d="M2 1.5h9.5v13H2z" fill="#777"/><path d="M3 0.5h9.5v13" fill="none" stroke="#777" stroke-width="1"/></svg>
<div class="t " style="left:1173px;top:121.00px;font-size:14px;color:#777;">Блокнот</div>
<svg class="a" style="left:1255px;top:120px" width="15" height="15" viewBox="0 0 15 15"><path d="M6 2H2v11h4" fill="none" stroke="#777" stroke-width="2"/><path d="M5 6h5V3l4.5 4.5L10 12V9H5z" fill="#777"/></svg>
<div class="t " style="left:1274px;top:121.00px;font-size:14px;color:#777;">Выйти</div>
<div class="a" style="left:1903px;top:103px;width:17px;height:871px;background:#f1f1f1"></div>
<div class="a" style="left:1905px;top:167px;width:13px;height:412px;background:#c1c1c1"></div>
<svg class="a" style="left:1908px;top:110px" width="8" height="5" viewBox="0 0 8 5"><path d="M0 4.5L3.75 0.3 7.5 4.5z" fill="#505050"/></svg>
<svg class="a" style="left:1908px;top:963px" width="8" height="5" viewBox="0 0 8 5"><path d="M0 0.3L3.75 4.5 7.5 0.3z" fill="#505050"/></svg>
<div class="a" style="left:0px;top:974px;width:1903px;height:17px;background:#f1f1f1"></div>
<div class="a" style="left:17px;top:976px;width:1854px;height:13px;background:#c1c1c1"></div>
<svg class="a" style="left:5px;top:979px" width="5" height="8" viewBox="0 0 5 8"><path d="M4.5 0L0.3 3.75 4.5 7.5z" fill="#a0a0a0"/></svg>
<svg class="a" style="left:1893px;top:979px" width="5" height="8" viewBox="0 0 5 8"><path d="M0.3 0L4.5 3.75 0.3 7.5z" fill="#505050"/></svg>
<div class="a" style="left:1903px;top:974px;width:17px;height:17px;background:#dcdcdc"></div>
<div class="a" style="left:0px;top:991px;width:1920px;height:49px;background:#fff"></div>
<div class="a" style="left:0px;top:991px;width:1920px;height:1px;background:#c8c8c8"></div>
<svg class="a" style="left:22px;top:1008px" width="16" height="16" viewBox="0 0 16 16"><path d="M3.5 1.5 H8.5 L12.5 5.5 V14.5 H3.5 Z M8.5 1.5 V5.5 H12.5" fill="none" stroke="#777" stroke-width="1" stroke-linejoin="miter"/></svg>
<div class="t " style="left:49px;top:1011.00px;font-size:13px;color:#3c4043;">phpMyAdmin-co....json</div>
<svg class="a" style="left:201px;top:1012px" width="12" height="7" viewBox="0 0 12 7"><path d="M1 6l5-5 5 5" fill="none" stroke="#5f6368" stroke-width="1.4"/></svg>
<svg class="a" style="left:247px;top:1008px" width="16" height="16" viewBox="0 0 16 16"><rect x="1" y="1" width="14" height="3.5" fill="#7a3a8a"/><rect x="1" y="4.5" width="14" height="3.5" fill="#2a4ab0"/><rect x="1" y="8" width="14" height="3.5" fill="#2a9a3a"/><rect x="1" y="11.5" width="14" height="2" fill="#555"/><rect x="6" y="1" width="4" height="12" fill="#d8b060" fill-opacity=".8"/></svg>
<div class="t " style="left:276px;top:1011.00px;font-size:13px;color:#3c4043;letter-spacing:-0.3px">design_code_data_....tgz</div>
<svg class="a" style="left:428px;top:1012px" width="12" height="7" viewBox="0 0 12 7"><path d="M1 6l5-5 5 5" fill="none" stroke="#5f6368" stroke-width="1.4"/></svg>
<svg class="a" style="left:474px;top:1008px" width="16" height="16" viewBox="0 0 16 16"><rect x="1" y="1" width="14" height="3.5" fill="#7a3a8a"/><rect x="1" y="4.5" width="14" height="3.5" fill="#2a4ab0"/><rect x="1" y="8" width="14" height="3.5" fill="#2a9a3a"/><rect x="1" y="11.5" width="14" height="2" fill="#555"/><rect x="6" y="1" width="4" height="12" fill="#d8b060" fill-opacity=".8"/></svg>
<div class="t " style="left:503px;top:1011.00px;font-size:13px;color:#3c4043;letter-spacing:-0.3px">design_code_data_....tgz</div>
<svg class="a" style="left:655px;top:1012px" width="12" height="7" viewBox="0 0 12 7"><path d="M1 6l5-5 5 5" fill="none" stroke="#5f6368" stroke-width="1.4"/></svg>
<svg class="a" style="left:701px;top:1008px" width="16" height="16" viewBox="0 0 16 16"><rect x="1" y="1" width="14" height="3.5" fill="#7a3a8a"/><rect x="1" y="4.5" width="14" height="3.5" fill="#2a4ab0"/><rect x="1" y="8" width="14" height="3.5" fill="#2a9a3a"/><rect x="1" y="11.5" width="14" height="2" fill="#555"/><rect x="6" y="1" width="4" height="12" fill="#d8b060" fill-opacity=".8"/></svg>
<div class="t " style="left:730px;top:1011.00px;font-size:13px;color:#3c4043;letter-spacing:-0.3px">data_2018-12-28__....tgz</div>
<svg class="a" style="left:882px;top:1012px" width="12" height="7" viewBox="0 0 12 7"><path d="M1 6l5-5 5 5" fill="none" stroke="#5f6368" stroke-width="1.4"/></svg>
<div class="a" style="left:230px;top:998px;width:1px;height:36px;background:#dadce0"></div>
<div class="a" style="left:457px;top:998px;width:1px;height:36px;background:#dadce0"></div>
<div class="a" style="left:684px;top:998px;width:1px;height:36px;background:#dadce0"></div>
<div class="a" style="left:911px;top:998px;width:1px;height:36px;background:#dadce0"></div>
<div class="a" style="left:1778px;top:999px;width:106px;height:32px;background:#fff;border:1px solid #b8b8b8;border-radius:4px;box-sizing:border-box"></div>
<div class="t " style="left:1794px;top:1009.00px;font-size:12px;color:#3c4043;">Показать все</div>
<svg class="a" style="left:1896px;top:1009px" width="12" height="12" viewBox="0 0 12 12"><path d="M1 1l10 10M11 1L1 11" stroke="#5f6368" stroke-width="1.9"/></svg>
<div class="a" style="left:0px;top:1040px;width:1920px;height:40px;background:#101010"></div>
<div class="a" style="left:441px;top:1040px;width:48px;height:40px;background:#3b3b3b"></div>
<svg class="a" style="left:15px;top:1052px" width="17" height="17" viewBox="0 0 17 17"><path d="M0 2.3L7 1.3V8H0zM8 1.1L17 0V8H8zM0 9H7V15.7L0 14.7zM8 9H17V17L8 15.9z" fill="#fff"/></svg>
<svg class="a" style="left:63px;top:1052px" width="17" height="17" viewBox="0 0 17 17"><circle cx="10" cy="7" r="5.5" fill="none" stroke="#fff" stroke-width="1.3"/><path d="M6 11L1 16" stroke="#fff" stroke-width="1.5"/></svg>
<svg class="a" style="left:111px;top:1052px" width="18" height="17" viewBox="0 0 18 17"><rect x="1.5" y="4.5" width="10" height="8" fill="none" stroke="#fff" stroke-width="1.2"/><path d="M1 1.5h11M1 15.5h11M14.5 1v15" stroke="#fff" stroke-width="1.2"/><rect x="14" y="4" width="3" height="3" fill="#fff"/></svg>
<svg class="a" style="left:159px;top:1048px" width="24" height="24" viewBox="0 0 24 24"><path d="M21.5 13.5H7.5c.3 3.2 2.8 5 6 5 2.5 0 4.8-.8 7-2.2v4.3c-2.2 1.3-4.8 2-7.6 2C6.5 22.6 2.6 18.4 2.6 12.5 2.6 6.3 7 1.4 13 1.4c5.3 0 8.6 3.6 8.6 9.5zM16.8 10c0-2.4-1.4-4.2-3.8-4.2-2.6 0-4.6 1.8-5.2 4.2z" fill="#0f78d7"/></svg>
<svg class="a" style="left:208px;top:1048px" width="24" height="24" viewBox="0 0 24 24"><path d="M1.5 4h7.5l2 2H22.5v15H1.5z" fill="#f5d37a"/><rect x="3" y="5" width="4" height="1.5" fill="#fff" opacity=".8"/><rect x="1.5" y="8" width="21" height="13" fill="#fbe29a"/><path d="M7.5 21.5v-6h9v6" fill="none" stroke="#2d8fe0" stroke-width="2.6"/></svg>
<svg class="a" style="left:257px;top:1048px" width="24" height="24" viewBox="0 0 24 24"><circle cx="12" cy="12" r="11.5" fill="#6aa832"/><path d="M8 5.5v9.5q0 3 3 3 2 0 3.5-2V5.5h3v13.3h-3v-1.5" fill="none" stroke="#fff" stroke-width="2.6" transform="rotate(12 12 12)"/><path d="M8 13v9" stroke="#fff" stroke-width="2.6" transform="rotate(12 12 12)"/></svg>
<svg class="a" style="left:306px;top:1048px" width="24" height="24" viewBox="0 0 24 24"><path d="M2 7h20v15H2z" fill="#fff"/><path d="M8 7V5a4 4 0 0 1 8 0v2" fill="none" stroke="#fff" stroke-width="1.5"/><rect x="7" y="10" width="4.5" height="4.5" fill="#f25022"/><rect x="12.5" y="10" width="4.5" height="4.5" fill="#7fba00"/><rect x="7" y="15.5" width="4.5" height="4.5" fill="#00a4ef"/><rect x="12.5" y="15.5" width="4.5" height="4.5" fill="#ffb900"/></svg>
<svg class="a" style="left:355px;top:1048px" width="24" height="24" viewBox="0 0 24 24"><ellipse cx="10" cy="8" rx="9" ry="6" fill="#f0f0f0" stroke="#d03030" stroke-width="1.5"/><circle cx="14" cy="19" r="3" fill="none" stroke="#2a9ad8" stroke-width="1.8"/><circle cx="20" cy="16" r="3" fill="none" stroke="#2a9ad8" stroke-width="1.8"/><path d="M8 6l6 11M14 6l5 8" stroke="#aaa" stroke-width="1"/></svg>
<svg class="a" style="left:404px;top:1048px" width="24" height="24" viewBox="0 0 24 24"><path d="M1 9L12 2 23 9V20H1z" fill="#fff"/><path d="M1 9l11 7 11-7" fill="none" stroke="#222" stroke-width="1"/></svg>
<svg class="a" style="left:453px;top:1048px" width="24" height="24" viewBox="0 0 24 24"><circle cx="12" cy="12" r="11" fill="#db4437"/><path d="M12 12L22.5 9A11 11 0 0 1 6.5 21.5z" fill="#0f9d58"/><path d="M12 12L6.5 21.5A11 11 0 0 1 2 6z" fill="#0f9d58"/><path d="M12 12L2 6A11 11 0 0 1 22.5 9z" fill="#db4437"/><path d="M12 12L22.5 9A11 11 0 0 1 12 23z" fill="#ffcd40"/><circle cx="12" cy="12" r="5" fill="#fff"/><circle cx="12" cy="12" r="4" fill="#4285f4"/></svg>
<svg class="a" style="left:502px;top:1048px" width="24" height="24" viewBox="0 0 24 24"><path d="M4 6L14 2 22 7 20 19 10 22 3 16z" fill="#e0252a"/><path d="M9 8h7v3h-4v2h3v2H9z" fill="#fff"/></svg>
<svg class="a" style="left:550px;top:1048px" width="24" height="24" viewBox="0 0 24 24"><rect x="4" y="1" width="16" height="22" fill="#fff"/><rect x="6" y="3" width="12" height="4" fill="#111"/><path d="M6 10h2M10 10h2M14 10h2M6 14h2M10 14h2M14 14h2M6 18h2M10 18h2M14 18h2" stroke="#111" stroke-width="2"/></svg>
<svg class="a" style="left:599px;top:1048px" width="24" height="24" viewBox="0 0 24 24"><path d="M4 4h13l4 4v15H4z" fill="#dfe8f0"/><path d="M7 12h10M7 15h10M7 18h10" stroke="#3a6a9a" stroke-width="1.3"/><path d="M2 6q4-4 9-2" fill="none" stroke="#6a9aca" stroke-width="2"/></svg>
<svg class="a" style="left:648px;top:1048px" width="24" height="24" viewBox="0 0 24 24"><circle cx="12" cy="12" r="11" fill="#9ac03a"/><path d="M7 6v12M7 12q8 0 8-4 0-3-5-2" fill="none" stroke="#fff" stroke-width="2.5"/><path d="M3 20L20 3" stroke="#ddd" stroke-width="1.5"/></svg>
<svg class="a" style="left:697px;top:1048px" width="24" height="24" viewBox="0 0 24 24"><ellipse cx="12" cy="13" rx="11" ry="5" fill="#1a8af0" transform="rotate(-15 12 13)"/><ellipse cx="13" cy="11" rx="6" ry="2.5" fill="#c8e8ff" transform="rotate(-15 12 13)"/></svg>
<div class="a" style="left:411px;top:1058px;width:26px;height:17px;border-radius:9px;background:#3a3a3a;border:1px solid #888;box-sizing:border-box"></div>
<div class="t " style="left:414px;top:1062.00px;font-size:11px;color:#fff;font-weight:bold">99+</div>
<div class="a" style="left:200px;top:1078px;width:40px;height:2px;background:#dde8b8"></div>
<div class="a" style="left:396px;top:1078px;width:40px;height:2px;background:#dde8b8"></div>
<div class="a" style="left:441px;top:1078px;width:48px;height:2px;background:#dde8b8"></div>
<div class="a" style="left:493px;top:1078px;width:40px;height:2px;background:#dde8b8"></div>
<div class="a" style="left:543px;top:1078px;width:40px;height:2px;background:#dde8b8"></div>
<div class="a" style="left:593px;top:1078px;width:39px;height:2px;background:#dde8b8"></div>
<div class="a" style="left:641px;top:1078px;width:40px;height:2px;background:#dde8b8"></div>
<div class="a" style="left:690px;top:1078px;width:40px;height:2px;background:#dde8b8"></div>
<svg class="a" style="left:1661px;top:1052px" width="16" height="17" viewBox="0 0 16 17"><circle cx="11" cy="4" r="2.8" fill="none" stroke="#fff" stroke-width="1.1"/><path d="M7.5 12a4 4 0 0 1 7 0" fill="none" stroke="#fff" stroke-width="1.1"/><circle cx="5" cy="9" r="2.8" fill="none" stroke="#fff" stroke-width="1.1"/><path d="M1 16a4 4 0 0 1 8 0" fill="none" stroke="#fff" stroke-width="1.1"/></svg>
<svg class="a" style="left:1699px;top:1054px" width="13" height="8" viewBox="0 0 13 8"><path d="M0.5 7L6.5 1 12.5 7" fill="none" stroke="#fff" stroke-width="1.2"/></svg>
<svg class="a" style="left:1720px;top:1053px" width="18" height="12" viewBox="0 0 18 12"><rect x="3" y="3" width="12" height="7" fill="#fff" stroke="#fff"/><rect x="15.5" y="5" width="2" height="3" fill="#fff"/><circle cx="2" cy="2" r="1.5" fill="none" stroke="#fff" stroke-width=".8"/></svg>
<svg class="a" style="left:1744px;top:1052px" width="17" height="16" viewBox="0 0 17 16"><path d="M1 5.5h3l4-4v13l-4-4H1z" fill="none" stroke="#fff" stroke-width="1.1"/><path d="M10.5 5q1.5 2.5 0 5M13 3q3 4.5 0 9M15.5 1.5q3.5 6 0 12" fill="none" stroke="#fff" stroke-width="1"/></svg>
<div class="t " style="left:1772px;top:1055.00px;font-size:12px;color:#fff;letter-spacing:-0.6px">РУС</div>
<div class="t " style="left:1820px;top:1045.00px;font-size:12px;color:#fff;letter-spacing:-0.5px">21:38</div>
<div class="t " style="left:1808px;top:1063.00px;font-size:12px;color:#fff;letter-spacing:-0.65px">10.01.2019</div>
<svg class="a" style="left:1878px;top:1052px" width="18" height="16" viewBox="0 0 18 16"><path d="M1 1h16v11H6l-3 3v-3H1z" fill="#fff"/><path d="M4 4h10M4 6.5h10M4 9h10" stroke="#101010" stroke-width="1"/></svg>
<div class="a" style="left:1885px;top:1058px;width:19px;height:19px;border-radius:50%;background:#3a3a3a;border:1.5px solid #666;box-sizing:border-box"></div>
<div class="t " style="left:1888.5px;top:1063.00px;font-size:11px;color:#fff;font-weight:bold">21</div>
<div class="a" style="left:1915px;top:1040px;width:1px;height:40px;background:#555"></div>
</body></html>
